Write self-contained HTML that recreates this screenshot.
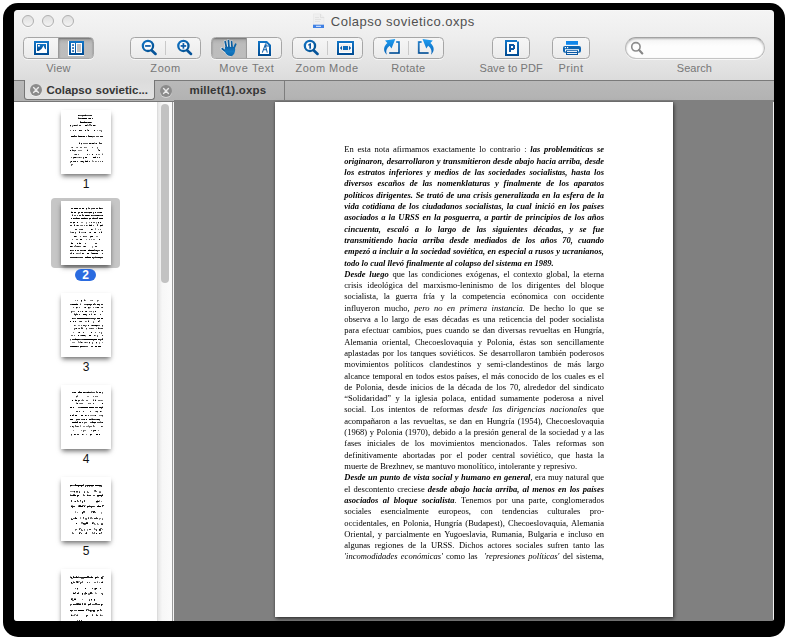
<!DOCTYPE html>
<html><head><meta charset="utf-8">
<style>
html,body{margin:0;padding:0;background:#fff;}
body{width:788px;height:641px;position:relative;overflow:hidden;font-family:"Liberation Sans",sans-serif;}
#frame{position:absolute;left:3px;top:3px;width:782px;height:634px;background:#000;border-radius:15px;}
#win{position:absolute;left:14px;top:10px;width:760px;height:611px;overflow:hidden;border-radius:4px 4px 3px 3px;background:#808080;}
#abs{position:absolute;left:-14px;top:-10px;width:788px;height:641px;}
#abs div,#abs svg{position:absolute;}
#tb{left:14px;top:10px;width:760px;height:70px;background:linear-gradient(#f9f9f9 0px,#f4f4f4 1.5px,#eeeeee 26px,#e5e5e5 50px,#dcdcdc 70px);}
.tl{width:10px;height:10px;border-radius:50%;border:1px solid #b0b0b0;background:linear-gradient(#dedede,#f3f3f3);top:15px;box-shadow:0 1px 0 rgba(255,255,255,.6);}
#title{left:330.8px;top:13px;height:18px;line-height:18px;font-size:13px;letter-spacing:.5px;color:#505050;white-space:nowrap;}
.seg{top:37px;height:20px;border:1px solid #a6a6a6;border-radius:4.5px;background:linear-gradient(#f6f6f6,#ebebeb);box-shadow:0 1px 0 rgba(255,255,255,.7);overflow:hidden;}
.seg .dv{top:3px;width:1px;height:14px;background:#c9c9c9;}
.seg .on{top:0;height:20px;background:linear-gradient(#a9a9a9,#bcbcbc 30%,#bdbdbd);box-shadow:inset 0 1px 2px rgba(0,0,0,.35);}
.lbl{top:61px;height:14px;line-height:14px;font-size:11px;color:#777;white-space:nowrap;text-align:center;transform:translateX(-50%);}
#tabs{left:14px;top:80px;width:760px;height:22px;background:linear-gradient(#b9b9b9,#b2b2b2);border-top:1px solid #7a7a7a;border-bottom:1px solid #777;box-sizing:border-box;}
.tabt{top:83px;height:14px;line-height:14px;font-size:11.5px;font-weight:bold;color:#363636;white-space:nowrap;}
.cls{width:12px;height:12px;border-radius:50%;background:#8b8b8b;box-shadow:0 1px 0 rgba(255,255,255,.45);}
#side{left:14px;top:102px;width:143px;height:519px;background:#fff;}
#sbar{left:157px;top:102px;width:15px;height:519px;background:linear-gradient(90deg,#e6e6e6,#f7f7f7 30%,#fbfbfb);border-left:1px solid #dcdcdc;box-sizing:border-box;}
#sthumb{left:161px;top:104px;width:8px;height:179px;border-radius:4px;background:#c2c2c2;}
#sdiv{left:172px;top:102px;width:2px;height:519px;background:linear-gradient(90deg,#9a9a9a 50%,#f4f4f4 50%);}
#main{left:174px;top:100px;width:600px;height:521px;background:#808080;}
#page{left:275px;top:102px;width:398px;height:515px;background:#fff;box-shadow:1px 2px 4px rgba(0,0,0,.55),0 0 2px rgba(0,0,0,.3);}
.ln{left:344.3px;width:259.7px;height:20px;line-height:20px;font-family:"Liberation Serif",serif;font-size:8.5px;color:#000;white-space:nowrap;}
.thumb{left:61px;width:50px;height:64px;background:#fff;box-shadow:0 3px 5px -1px rgba(0,0,0,.6);}
.tsvg{left:0;top:0;}
.tsel{left:51px;width:69px;height:70px;border-radius:4px;background:#c6c6c6;}
.tnum{left:61px;width:50px;height:14px;line-height:14px;text-align:center;font-size:12px;color:#111;}
.tbadge{left:75px;width:21px;height:12px;line-height:12px;border-radius:6px;background:#2a6be0;color:#fff;font-size:12px;font-weight:bold;text-align:center;}
</style></head>
<body>
<div id="frame"></div>
<div id="win"><div id="abs">
<div id="tb"></div>
<div class="tl" style="left:22px"></div><div class="tl" style="left:42px"></div><div class="tl" style="left:62px"></div>
<!--TITLEICON-->
<div id="title">Colapso sovietico.oxps</div>

<div class="seg" style="left:23px;width:69px"><div class="on" style="left:35px;width:34px"></div><div class="dv" style="left:34px;background:#9a9a9a;top:0;height:20px"></div></div>
<div class="seg" style="left:130px;width:69px"><div class="dv" style="left:34px"></div></div>
<div class="seg" style="left:211px;width:69px"><div class="on" style="left:0;width:34.5px"></div><div class="dv" style="left:34px;background:#9a9a9a;top:0;height:20px"></div></div>
<div class="seg" style="left:292px;width:69px"><div class="dv" style="left:34px"></div></div>
<div class="seg" style="left:373px;width:69px"><div class="dv" style="left:34px"></div></div>
<div class="seg" style="left:492px;width:36px"></div>
<div class="seg" style="left:552px;width:36px"></div>
<div class="seg" id="search" style="left:625px;width:138px;border-radius:11px;background:linear-gradient(#f3f3f3,#fdfdfd 40%,#fdfdfd);box-shadow:inset 0 1px 2px rgba(0,0,0,.25),0 1px 0 rgba(255,255,255,.7);border-color:#a2a2a2 #bababa #c4c4c4 #bababa"></div>
<div class="lbl" style="left:58.5px;letter-spacing:.2px">View</div>
<div class="lbl" style="left:165.6px;letter-spacing:.6px">Zoom</div>
<div class="lbl" style="left:246.8px;letter-spacing:.6px">Move Text</div>
<div class="lbl" style="left:327px;letter-spacing:.48px">Zoom Mode</div>
<div class="lbl" style="left:408.4px;letter-spacing:.3px">Rotate</div>
<div class="lbl" style="left:511.1px;letter-spacing:.08px">Save to PDF</div>
<div class="lbl" style="left:571px;letter-spacing:.45px">Print</div>
<div class="lbl" style="left:694.4px;letter-spacing:.08px">Search</div>

<div id="tabs"></div>
<div id="tab1" style="left:24px;top:80px;width:129px;height:19px;background:linear-gradient(#dcdcdc,#e2e2e2);border:1px solid #757575;border-top:none;border-radius:0 0 3.5px 3.5px"></div>
<div style="left:284px;top:81px;width:1px;height:20px;background:#7d7d7d"></div>
<div class="cls" style="left:30px;top:84px"></div>
<div class="cls" style="left:160px;top:85px"></div>
<div class="tabt" style="left:46.4px;letter-spacing:0;word-spacing:.6px">Colapso sovietic...</div>
<div class="tabt" style="left:189.5px;letter-spacing:.2px">millet(1).oxps</div>

<svg id="icons" width="788" height="100" viewBox="0 0 788 100" style="left:0;top:0">
<defs>
<linearGradient id="gb" x1="0" y1="0" x2="0" y2="1"><stop offset="0" stop-color="#1276c8"/><stop offset="1" stop-color="#004a90"/></linearGradient>
<linearGradient id="gm" x1="0" y1="0" x2="1" y2="1"><stop offset="0" stop-color="#1273c4"/><stop offset="1" stop-color="#03508f"/></linearGradient>
<linearGradient id="ga" x1="0" y1="0" x2="0" y2="1"><stop offset="0" stop-color="#1c9cf2"/><stop offset="1" stop-color="#0b62b4"/></linearGradient>
<linearGradient id="gh" x1="0" y1="0" x2="0" y2="1"><stop offset="0" stop-color="#0c62a8"/><stop offset=".5" stop-color="#1479c2"/><stop offset="1" stop-color="#0b67ad"/></linearGradient>
</defs>
<!-- title doc icon -->
<path d="M313.5,14 h7 l3.5,3.5 v7.5 h-10.5z" fill="#efefef" stroke="#e6e6e6" stroke-width=".6"/>
<path d="M320.5,14 v3.5 h3.5" fill="none" stroke="#dadada" stroke-width=".7"/>
<path d="M315,17.5h4M315,19.5h6M315,21.5h5" stroke="#e2e2e2" stroke-width="1"/>
<rect x="313" y="24.7" width="11" height="3.3" fill="#3f80e4"/><rect x="316" y="25.8" width="5" height="1" fill="#e8f0ff"/>
<!-- view 1 -->
<rect x="33.5" y="40.5" width="16" height="15" fill="#fbfbfb" opacity=".8"/>
<rect x="34" y="41" width="15" height="14" fill="url(#gb)"/>
<rect x="36" y="43" width="11" height="10" fill="#fff"/>
<rect x="37" y="44" width="9" height="7" fill="url(#gb)"/>
<path d="M38.6,51 L41.5,49 L43.6,45.4 L44.6,48.2 L46,49.6 V51Z" fill="#fff"/>
<rect x="38" y="45" width="1.8" height="1.6" fill="#fff"/>
<!-- view 2 -->
<rect x="68" y="41" width="16" height="15" fill="#fff"/>
<rect x="69" y="41" width="15" height="14" fill="url(#gb)"/>
<rect x="71" y="43" width="4" height="10" fill="#fff"/>
<rect x="72.2" y="44.2" width="1.7" height="1.7" fill="#0a58a6"/><rect x="72.2" y="47.2" width="1.7" height="1.7" fill="#0a58a6"/><rect x="72.2" y="50.2" width="1.7" height="1.7" fill="#0a58a6"/>
<rect x="76.5" y="43.5" width="5" height="9" fill="#c2c2c2" stroke="#fff" stroke-width="1"/>
<!-- zoom out / in -->
<g transform="translate(147.95,45.9)"><circle cx="0" cy="0" r="5.1" fill="#fdfdfd" stroke="url(#gm)" stroke-width="2.3"/><path d="M3.9,4.6 L7.6,8" stroke="#06549a" stroke-width="2.7" stroke-linecap="round" fill="none"/></g><rect x="145.1" y="45.1" width="5.6" height="1.7" fill="#0a5aa6"/>
<g transform="translate(183.4,45.9)"><circle cx="0" cy="0" r="5.1" fill="#fdfdfd" stroke="url(#gm)" stroke-width="2.3"/><path d="M3.9,4.6 L7.6,8" stroke="#06549a" stroke-width="2.7" stroke-linecap="round" fill="none"/></g><rect x="180.6" y="45.1" width="5.6" height="1.7" fill="#0a5aa6"/><rect x="182.55" y="43.1" width="1.7" height="5.6" fill="#0a5aa6"/>
<!-- hand -->
<g stroke="#f4f4f4" stroke-width="2.7" stroke-linecap="round" fill="none" opacity=".8">
<path d="M225,41.6 L226.4,47.6M228.2,40.5 L228.8,47M231.4,41.6 L231.9,47.5M221.8,48.6 L225.4,51.4"/></g>
<path d="M224.4,47 L233,47 L231,56.4 L228,56.2 C226,54.8 224.8,53 224,51Z" fill="#f4f4f4" opacity=".8"/>
<g stroke-width="1.75" stroke-linecap="round" fill="none">
<path d="M225.2,41.7 L226.5,47.8" stroke="#0a5c9e"/><path d="M228.4,40.7 L229,47.2" stroke="#0a5c9e"/><path d="M231.6,41.7 L232.1,47.6" stroke="#0a5c9e"/><path d="M235.7,44.2 L234,48.2" stroke="#0c64a8"/><path d="M222.2,48.7 L225.8,51.5" stroke="#0a5a9a"/></g>
<path d="M225,46.8 L234.9,47 C235.6,50 235,53 233,55.2 C231.5,56.3 229.5,56.3 228,55.6 C226.2,54.4 225.2,52.8 224.7,50.6Z" fill="url(#gh)"/>
<!-- text select -->
<path d="M257.5,40.5 H267.2 L271.5,44.8 V56.5 H257.5Z" fill="#fbfbfb" opacity=".7"/>
<path d="M258,41 H267 L271,45 V56 H258Z" fill="url(#gb)"/>
<path d="M260,43 H266.3 L269,45.7 V54 H260Z" fill="#fff"/>
<path d="M266,43.2 V46 H269" stroke="#0c5aa6" stroke-width="1" fill="none"/>
<path d="M262.3,52.6 L265.2,45 L267.3,52.6 M263.4,49.8 H266.6" stroke="#1463ad" stroke-width="1.05" fill="none"/>
<!-- zoom mode 1 -->
<g transform="translate(309.95,45.9)"><circle cx="0" cy="0" r="5.1" fill="#fdfdfd" stroke="url(#gm)" stroke-width="2.3"/><path d="M3.9,4.6 L7.6,8" stroke="#06549a" stroke-width="2.7" stroke-linecap="round" fill="none"/></g>
<path d="M308.2,44.6 L310,43.3 H311 V48.7 H309.3 V45.2 L308.2,45.8Z" fill="#0a58a4"/>
<!-- fit width -->
<rect x="336.5" y="40.5" width="18" height="15" fill="#fbfbfb" opacity=".8"/>
<rect x="337" y="41" width="17" height="14" fill="url(#gb)"/>
<rect x="339" y="43" width="13" height="10" fill="#fff"/>
<rect x="340" y="44" width="11" height="8" fill="#f0f0f0"/>
<rect x="343" y="46" width="5" height="4" fill="#0e6cbc"/>
<path d="M339.9,48 L342,45.8 V50.2Z M351.1,48 L349,45.8 V50.2Z" fill="#0b5ba8"/>
<!-- rotate left -->
<path d="M396,41 H400 V54 H389 V52 H398 V43 H396Z" fill="url(#gb)" stroke="#fbfbfb" stroke-width=".5" stroke-opacity=".7"/>
<path d="M395.3,39.1 L385,40.6 L387.4,43.1 C383.6,46.2 382.6,51.2 386.9,54.8 C385.4,51.2 386.4,48.3 389.6,45.7 L391.5,48.4Z" fill="url(#ga)"/>
<!-- rotate right (mirror about 408.9) -->
<g transform="translate(817.8,0) scale(-1,1)">
<path d="M396,41 H400 V54 H389 V52 H398 V43 H396Z" fill="url(#gb)" stroke="#fbfbfb" stroke-width=".5" stroke-opacity=".7"/>
<path d="M395.3,39.1 L385,40.6 L387.4,43.1 C383.6,46.2 382.6,51.2 386.9,54.8 C385.4,51.2 386.4,48.3 389.6,45.7 L391.5,48.4Z" fill="url(#ga)"/>
</g>
<!-- save pdf -->
<path d="M504.5,39.5 H517.5 V41 H519.5 V56.5 H504.5Z" fill="#fbfbfb" opacity=".7"/>
<path d="M505,40 H517 V41.5 H519 V56 H505Z" fill="url(#gb)"/>
<rect x="507" y="42" width="10" height="12" fill="#fff"/>
<path d="M509,44 H514 V45 H515 V49 H514 V50 H511 V52 H509Z M511,46 V48 H513 V46Z" fill="#0b57a3" fill-rule="evenodd"/>
<!-- print -->
<rect x="565.5" y="40.6" width="13" height="15" fill="#fbfbfb" opacity=".6"/>
<rect x="566" y="41" width="12" height="3.8" fill="#0f86ea"/>
<rect x="563" y="46" width="18" height="6.8" rx="2" fill="#0c64b2"/>
<rect x="564.8" y="47" width="1.2" height="1.2" fill="#fff"/><rect x="567" y="47" width="1.2" height="1.2" fill="#fff"/>
<path d="M565,51.6 V49.3 H579 V51.6 H578 V50.6 H566 V51.6Z" fill="#fff"/>
<rect x="566" y="50.4" width="12" height="4.6" fill="#0a58a3"/>
<rect x="567" y="51.1" width="10" height=".9" fill="#fff"/><rect x="567" y="53.1" width="10" height=".9" fill="#fff"/>
<!-- search icon -->
<circle cx="635.9" cy="46.85" r="4.2" fill="none" stroke="#8c8c8c" stroke-width="1.6"/>
<path d="M639.1,50.1 L642.3,53.4" stroke="#878787" stroke-width="2.2" stroke-linecap="round"/>
<!-- tab close x -->
<g stroke="#e9e9e9" stroke-width="1.4" stroke-linecap="round"><path d="M33.6,87.6 l4.8,4.8 m0,-4.8 l-4.8,4.8"/><path d="M163.6,88.6 l4.8,4.8 m0,-4.8 l-4.8,4.8"/></g>
</svg>

<div id="side"></div>
<div id="sbar"></div><div id="sthumb"></div><div id="sdiv"></div>
<div id="main"></div><div style="left:773px;top:102px;width:1px;height:519px;background:#f2f2f2"></div>
<div class="thumb" style="top:109.8px"><svg class="tsvg" shape-rendering="crispEdges" width="50" height="64" viewBox="0 0 50 64"><rect x="17" y="5" width="1" height="1" fill="#000" opacity="1"/><rect x="18" y="5" width="3" height="1" fill="#000" opacity="0.7"/><rect x="21" y="5" width="3" height="1" fill="#000" opacity="0.85"/><rect x="21" y="6" width="1" height="1" fill="#000" opacity="0.4"/><rect x="24" y="5" width="1" height="1" fill="#000" opacity="1"/><rect x="24" y="4" width="1" height="1" fill="#000" opacity="0.25"/><rect x="25" y="5" width="3" height="1" fill="#000" opacity="0.7"/><rect x="28" y="5" width="1" height="1" fill="#000" opacity="0.7"/><rect x="29" y="5" width="2" height="1" fill="#000" opacity="0.85"/><rect x="17" y="8" width="3" height="1" fill="#000" opacity="0.85"/><rect x="17" y="7" width="1" height="1" fill="#000" opacity="0.4"/><rect x="20" y="8" width="1" height="1" fill="#000" opacity="0.7"/><rect x="21" y="8" width="3" height="1" fill="#000" opacity="1"/><rect x="24" y="8" width="2" height="1" fill="#000" opacity="1"/><rect x="27" y="8" width="1" height="1" fill="#000" opacity="0.7"/><rect x="28" y="8" width="2" height="1" fill="#000" opacity="1"/><rect x="31" y="8" width="1" height="1" fill="#000" opacity="0.85"/><rect x="19" y="12" width="2" height="1" fill="#000" opacity="1"/><rect x="19" y="11" width="1" height="1" fill="#000" opacity="0.6"/><rect x="21" y="12" width="2" height="1" fill="#000" opacity="1"/><rect x="23" y="12" width="3" height="1" fill="#000" opacity="1"/><rect x="23" y="11" width="1" height="1" fill="#000" opacity="0.4"/><rect x="26" y="12" width="1" height="1" fill="#000" opacity="0.7"/><rect x="27" y="12" width="3" height="1" fill="#000" opacity="1"/><rect x="30" y="12" width="1" height="1" fill="#000" opacity="0.7"/><rect x="9" y="15" width="1" height="1" fill="#000" opacity="1"/><rect x="9" y="16" width="1" height="1" fill="#000" opacity="0.25"/><rect x="11" y="15" width="2" height="1" fill="#000" opacity="0.45"/><rect x="11" y="16" width="1" height="1" fill="#000" opacity="0.6"/><rect x="13" y="15" width="1" height="1" fill="#000" opacity="1"/><rect x="14" y="15" width="2" height="1" fill="#000" opacity="0.8"/><rect x="16" y="15" width="1" height="1" fill="#000" opacity="0.6"/><rect x="16" y="14" width="1" height="1" fill="#000" opacity="0.25"/><rect x="18" y="15" width="1" height="1" fill="#000" opacity="0.8"/><rect x="19" y="15" width="1" height="1" fill="#000" opacity="0.8"/><rect x="24" y="15" width="2" height="1" fill="#000" opacity="1"/><rect x="26" y="15" width="2" height="1" fill="#000" opacity="0.45"/><rect x="26" y="14" width="1" height="1" fill="#000" opacity="0.4"/><rect x="28" y="15" width="1" height="1" fill="#000" opacity="0.45"/><rect x="28" y="14" width="1" height="1" fill="#000" opacity="0.6"/><rect x="29" y="15" width="1" height="1" fill="#000" opacity="0.45"/><rect x="29" y="14" width="1" height="1" fill="#000" opacity="0.6"/><rect x="30" y="15" width="1" height="1" fill="#000" opacity="0.8"/><rect x="32" y="15" width="2" height="1" fill="#000" opacity="1"/><rect x="34" y="15" width="1" height="1" fill="#000" opacity="0.45"/><rect x="9" y="20" width="1" height="1" fill="#000" opacity="0.6"/><rect x="12" y="20" width="1" height="1" fill="#000" opacity="0.8"/><rect x="14" y="20" width="1" height="1" fill="#000" opacity="0.8"/><rect x="18" y="20" width="1" height="1" fill="#000" opacity="1"/><rect x="19" y="20" width="2" height="1" fill="#000" opacity="0.8"/><rect x="24" y="20" width="1" height="1" fill="#000" opacity="1"/><rect x="26" y="20" width="1" height="1" fill="#000" opacity="0.45"/><rect x="26" y="19" width="1" height="1" fill="#000" opacity="0.4"/><rect x="27" y="20" width="1" height="1" fill="#000" opacity="1"/><rect x="33" y="20" width="1" height="1" fill="#000" opacity="1"/><rect x="36" y="20" width="1" height="1" fill="#000" opacity="0.45"/><rect x="38" y="20" width="2" height="1" fill="#000" opacity="0.45"/><rect x="40" y="20" width="1" height="1" fill="#000" opacity="0.45"/><rect x="40" y="21" width="1" height="1" fill="#000" opacity="0.6"/><rect x="10" y="26" width="3" height="1" fill="#000" opacity="1"/><rect x="13" y="26" width="3" height="1" fill="#000" opacity="0.85"/><rect x="13" y="25" width="1" height="1" fill="#000" opacity="0.6"/><rect x="17" y="26" width="1" height="1" fill="#000" opacity="0.85"/><rect x="17" y="25" width="1" height="1" fill="#000" opacity="0.4"/><rect x="18" y="26" width="3" height="1" fill="#000" opacity="1"/><rect x="21" y="26" width="1" height="1" fill="#000" opacity="0.7"/><rect x="22" y="26" width="2" height="1" fill="#000" opacity="1"/><rect x="25" y="26" width="1" height="1" fill="#000" opacity="0.7"/><rect x="27" y="26" width="1" height="1" fill="#000" opacity="0.85"/><rect x="27" y="25" width="1" height="1" fill="#000" opacity="0.6"/><rect x="28" y="26" width="3" height="1" fill="#000" opacity="1"/><rect x="31" y="26" width="3" height="1" fill="#000" opacity="0.7"/><rect x="31" y="27" width="1" height="1" fill="#000" opacity="0.25"/><rect x="35" y="26" width="3" height="1" fill="#000" opacity="0.7"/><rect x="39" y="26" width="3" height="1" fill="#000" opacity="0.85"/><rect x="18" y="33" width="1" height="1" fill="#000" opacity="1"/><rect x="18" y="32" width="1" height="1" fill="#000" opacity="0.4"/><rect x="20" y="33" width="1" height="1" fill="#000" opacity="1"/><rect x="20" y="34" width="1" height="1" fill="#000" opacity="0.25"/><rect x="22" y="33" width="1" height="1" fill="#000" opacity="0.6"/><rect x="23" y="33" width="2" height="1" fill="#000" opacity="0.6"/><rect x="25" y="33" width="2" height="1" fill="#000" opacity="0.6"/><rect x="28" y="33" width="2" height="1" fill="#000" opacity="1"/><rect x="30" y="33" width="1" height="1" fill="#000" opacity="0.45"/><rect x="31" y="33" width="2" height="1" fill="#000" opacity="1"/><rect x="33" y="33" width="1" height="1" fill="#000" opacity="0.45"/><rect x="33" y="32" width="1" height="1" fill="#000" opacity="0.25"/><rect x="34" y="33" width="1" height="1" fill="#000" opacity="0.45"/><rect x="35" y="33" width="1" height="1" fill="#000" opacity="1"/><rect x="38" y="33" width="2" height="1" fill="#000" opacity="0.8"/><rect x="38" y="32" width="1" height="1" fill="#000" opacity="0.6"/><rect x="40" y="33" width="1" height="1" fill="#000" opacity="0.8"/><rect x="10" y="37" width="1" height="1" fill="#000" opacity="0.45"/><rect x="11" y="37" width="1" height="1" fill="#000" opacity="0.8"/><rect x="15" y="37" width="1" height="1" fill="#000" opacity="0.45"/><rect x="16" y="37" width="1" height="1" fill="#000" opacity="0.6"/><rect x="19" y="37" width="2" height="1" fill="#000" opacity="0.6"/><rect x="23" y="37" width="1" height="1" fill="#000" opacity="0.6"/><rect x="24" y="37" width="2" height="1" fill="#000" opacity="0.45"/><rect x="31" y="37" width="1" height="1" fill="#000" opacity="0.6"/><rect x="36" y="37" width="1" height="1" fill="#000" opacity="0.6"/><rect x="36" y="38" width="1" height="1" fill="#000" opacity="0.4"/><rect x="9" y="40" width="1" height="1" fill="#000" opacity="1"/><rect x="11" y="40" width="1" height="1" fill="#000" opacity="0.8"/><rect x="11" y="39" width="1" height="1" fill="#000" opacity="0.25"/><rect x="12" y="40" width="1" height="1" fill="#000" opacity="0.8"/><rect x="13" y="40" width="1" height="1" fill="#000" opacity="0.6"/><rect x="13" y="41" width="1" height="1" fill="#000" opacity="0.25"/><rect x="14" y="40" width="1" height="1" fill="#000" opacity="0.8"/><rect x="17" y="40" width="1" height="1" fill="#000" opacity="0.45"/><rect x="18" y="40" width="2" height="1" fill="#000" opacity="0.45"/><rect x="20" y="40" width="1" height="1" fill="#000" opacity="0.45"/><rect x="26" y="40" width="1" height="1" fill="#000" opacity="1"/><rect x="26" y="39" width="1" height="1" fill="#000" opacity="0.25"/><rect x="37" y="40" width="1" height="1" fill="#000" opacity="0.45"/><rect x="37" y="39" width="1" height="1" fill="#000" opacity="0.6"/><rect x="38" y="40" width="1" height="1" fill="#000" opacity="1"/><rect x="13" y="44" width="1" height="1" fill="#000" opacity="0.45"/><rect x="14" y="44" width="2" height="1" fill="#000" opacity="0.8"/><rect x="17" y="44" width="1" height="1" fill="#000" opacity="0.6"/><rect x="26" y="44" width="1" height="1" fill="#000" opacity="0.8"/><rect x="28" y="44" width="1" height="1" fill="#000" opacity="0.45"/><rect x="31" y="44" width="1" height="1" fill="#000" opacity="1"/><rect x="35" y="44" width="1" height="1" fill="#000" opacity="0.8"/><rect x="37" y="44" width="2" height="1" fill="#000" opacity="0.45"/><rect x="41" y="44" width="1" height="1" fill="#000" opacity="0.6"/><rect x="41" y="43" width="1" height="1" fill="#000" opacity="0.25"/><rect x="10" y="47" width="1" height="1" fill="#000" opacity="0.6"/><rect x="12" y="47" width="1" height="1" fill="#000" opacity="0.8"/><rect x="12" y="48" width="1" height="1" fill="#000" opacity="0.4"/><rect x="13" y="47" width="1" height="1" fill="#000" opacity="1"/><rect x="14" y="47" width="1" height="1" fill="#000" opacity="1"/><rect x="15" y="47" width="1" height="1" fill="#000" opacity="0.45"/><rect x="16" y="47" width="2" height="1" fill="#000" opacity="0.45"/><rect x="18" y="47" width="1" height="1" fill="#000" opacity="0.8"/><rect x="19" y="47" width="2" height="1" fill="#000" opacity="0.45"/><rect x="22" y="47" width="1" height="1" fill="#000" opacity="0.8"/><rect x="22" y="48" width="1" height="1" fill="#000" opacity="0.6"/><rect x="24" y="47" width="1" height="1" fill="#000" opacity="1"/><rect x="25" y="47" width="1" height="1" fill="#000" opacity="1"/><rect x="32" y="47" width="2" height="1" fill="#000" opacity="1"/><rect x="34" y="47" width="1" height="1" fill="#000" opacity="1"/><rect x="34" y="46" width="1" height="1" fill="#000" opacity="0.25"/><rect x="36" y="47" width="1" height="1" fill="#000" opacity="0.8"/><rect x="38" y="47" width="1" height="1" fill="#000" opacity="0.8"/><rect x="9" y="51" width="1" height="1" fill="#000" opacity="0.45"/><rect x="9" y="52" width="1" height="1" fill="#000" opacity="0.6"/><rect x="10" y="51" width="1" height="1" fill="#000" opacity="1"/><rect x="12" y="51" width="1" height="1" fill="#000" opacity="0.8"/><rect x="13" y="51" width="1" height="1" fill="#000" opacity="0.8"/><rect x="14" y="51" width="1" height="1" fill="#000" opacity="1"/><rect x="16" y="51" width="1" height="1" fill="#000" opacity="0.8"/><rect x="19" y="51" width="1" height="1" fill="#000" opacity="0.45"/><rect x="20" y="51" width="2" height="1" fill="#000" opacity="1"/><rect x="22" y="51" width="1" height="1" fill="#000" opacity="0.6"/><rect x="22" y="52" width="1" height="1" fill="#000" opacity="0.6"/><rect x="24" y="51" width="2" height="1" fill="#000" opacity="1"/><rect x="24" y="50" width="1" height="1" fill="#000" opacity="0.25"/><rect x="26" y="51" width="1" height="1" fill="#000" opacity="1"/><rect x="26" y="50" width="1" height="1" fill="#000" opacity="0.25"/><rect x="28" y="51" width="1" height="1" fill="#000" opacity="0.8"/><rect x="31" y="51" width="1" height="1" fill="#000" opacity="0.45"/><rect x="31" y="50" width="1" height="1" fill="#000" opacity="0.4"/><rect x="32" y="51" width="1" height="1" fill="#000" opacity="0.45"/><rect x="34" y="51" width="1" height="1" fill="#000" opacity="0.6"/><rect x="35" y="51" width="1" height="1" fill="#000" opacity="0.45"/><rect x="37" y="51" width="1" height="1" fill="#000" opacity="0.6"/><rect x="39" y="51" width="1" height="1" fill="#000" opacity="0.6"/><rect x="41" y="51" width="1" height="1" fill="#000" opacity="0.8"/><rect x="10" y="54" width="2" height="1" fill="#000" opacity="0.6"/><rect x="10" y="55" width="1" height="1" fill="#000" opacity="0.6"/></svg></div><div class="tnum" style="top:176.8px">1</div><div class="tsel" style="top:198px"></div><div class="thumb" style="top:201px"><svg class="tsvg" shape-rendering="crispEdges" width="50" height="64" viewBox="0 0 50 64"><rect x="10" y="7" width="2" height="1" fill="#000" opacity="0.85"/><rect x="13" y="7" width="1" height="1" fill="#000" opacity="1"/><rect x="14" y="7" width="3" height="1" fill="#000" opacity="1"/><rect x="18" y="7" width="1" height="1" fill="#000" opacity="0.85"/><rect x="19" y="7" width="1" height="1" fill="#000" opacity="0.85"/><rect x="21" y="7" width="2" height="1" fill="#000" opacity="1"/><rect x="25" y="7" width="1" height="1" fill="#000" opacity="1"/><rect x="25" y="8" width="1" height="1" fill="#000" opacity="0.4"/><rect x="27" y="7" width="1" height="1" fill="#000" opacity="0.7"/><rect x="27" y="6" width="1" height="1" fill="#000" opacity="0.4"/><rect x="28" y="7" width="1" height="1" fill="#000" opacity="0.85"/><rect x="30" y="7" width="2" height="1" fill="#000" opacity="0.7"/><rect x="30" y="8" width="1" height="1" fill="#000" opacity="0.25"/><rect x="32" y="7" width="2" height="1" fill="#000" opacity="0.85"/><rect x="35" y="7" width="2" height="1" fill="#000" opacity="0.85"/><rect x="38" y="7" width="1" height="1" fill="#000" opacity="1"/><rect x="38" y="6" width="1" height="1" fill="#000" opacity="0.4"/><rect x="39" y="7" width="1" height="1" fill="#000" opacity="1"/><rect x="40" y="7" width="2" height="1" fill="#000" opacity="0.7"/><rect x="10" y="11" width="2" height="1" fill="#000" opacity="1"/><rect x="10" y="10" width="1" height="1" fill="#000" opacity="0.25"/><rect x="13" y="11" width="2" height="1" fill="#000" opacity="1"/><rect x="17" y="11" width="2" height="1" fill="#000" opacity="0.85"/><rect x="17" y="12" width="1" height="1" fill="#000" opacity="0.6"/><rect x="20" y="11" width="2" height="1" fill="#000" opacity="1"/><rect x="23" y="11" width="3" height="1" fill="#000" opacity="0.85"/><rect x="26" y="11" width="2" height="1" fill="#000" opacity="0.7"/><rect x="28" y="11" width="3" height="1" fill="#000" opacity="1"/><rect x="28" y="12" width="1" height="1" fill="#000" opacity="0.25"/><rect x="32" y="11" width="1" height="1" fill="#000" opacity="0.85"/><rect x="32" y="12" width="1" height="1" fill="#000" opacity="0.6"/><rect x="34" y="11" width="1" height="1" fill="#000" opacity="1"/><rect x="36" y="11" width="3" height="1" fill="#000" opacity="0.7"/><rect x="39" y="11" width="2" height="1" fill="#000" opacity="1"/><rect x="11" y="14" width="1" height="1" fill="#000" opacity="0.85"/><rect x="11" y="13" width="1" height="1" fill="#000" opacity="0.4"/><rect x="13" y="14" width="2" height="1" fill="#000" opacity="0.7"/><rect x="16" y="14" width="1" height="1" fill="#000" opacity="0.7"/><rect x="18" y="14" width="2" height="1" fill="#000" opacity="0.85"/><rect x="21" y="14" width="2" height="1" fill="#000" opacity="0.85"/><rect x="21" y="13" width="1" height="1" fill="#000" opacity="0.6"/><rect x="24" y="14" width="1" height="1" fill="#000" opacity="1"/><rect x="25" y="14" width="3" height="1" fill="#000" opacity="1"/><rect x="28" y="14" width="1" height="1" fill="#000" opacity="0.7"/><rect x="30" y="14" width="1" height="1" fill="#000" opacity="1"/><rect x="31" y="14" width="2" height="1" fill="#000" opacity="0.7"/><rect x="33" y="14" width="1" height="1" fill="#000" opacity="0.7"/><rect x="34" y="14" width="2" height="1" fill="#000" opacity="0.85"/><rect x="36" y="14" width="1" height="1" fill="#000" opacity="1"/><rect x="37" y="14" width="1" height="1" fill="#000" opacity="1"/><rect x="38" y="14" width="3" height="1" fill="#000" opacity="0.7"/><rect x="41" y="14" width="1" height="1" fill="#000" opacity="1"/><rect x="10" y="17" width="1" height="1" fill="#000" opacity="1"/><rect x="12" y="17" width="1" height="1" fill="#000" opacity="1"/><rect x="13" y="17" width="2" height="1" fill="#000" opacity="0.85"/><rect x="15" y="17" width="1" height="1" fill="#000" opacity="1"/><rect x="15" y="16" width="1" height="1" fill="#000" opacity="0.4"/><rect x="16" y="17" width="2" height="1" fill="#000" opacity="1"/><rect x="18" y="17" width="1" height="1" fill="#000" opacity="0.85"/><rect x="20" y="17" width="3" height="1" fill="#000" opacity="1"/><rect x="23" y="17" width="2" height="1" fill="#000" opacity="1"/><rect x="23" y="16" width="1" height="1" fill="#000" opacity="0.25"/><rect x="25" y="17" width="2" height="1" fill="#000" opacity="0.85"/><rect x="28" y="17" width="2" height="1" fill="#000" opacity="1"/><rect x="28" y="18" width="1" height="1" fill="#000" opacity="0.25"/><rect x="31" y="17" width="1" height="1" fill="#000" opacity="0.85"/><rect x="32" y="17" width="1" height="1" fill="#000" opacity="1"/><rect x="32" y="16" width="1" height="1" fill="#000" opacity="0.25"/><rect x="33" y="17" width="3" height="1" fill="#000" opacity="0.85"/><rect x="36" y="17" width="1" height="1" fill="#000" opacity="0.85"/><rect x="36" y="16" width="1" height="1" fill="#000" opacity="0.6"/><rect x="38" y="17" width="3" height="1" fill="#000" opacity="1"/><rect x="41" y="17" width="1" height="1" fill="#000" opacity="1"/><rect x="9" y="21" width="2" height="1" fill="#000" opacity="0.8"/><rect x="12" y="21" width="2" height="1" fill="#000" opacity="1"/><rect x="12" y="22" width="1" height="1" fill="#000" opacity="0.25"/><rect x="16" y="21" width="1" height="1" fill="#000" opacity="1"/><rect x="20" y="21" width="1" height="1" fill="#000" opacity="0.45"/><rect x="21" y="21" width="1" height="1" fill="#000" opacity="0.45"/><rect x="25" y="21" width="1" height="1" fill="#000" opacity="0.45"/><rect x="25" y="22" width="1" height="1" fill="#000" opacity="0.4"/><rect x="28" y="21" width="1" height="1" fill="#000" opacity="0.45"/><rect x="30" y="21" width="1" height="1" fill="#000" opacity="0.8"/><rect x="32" y="21" width="2" height="1" fill="#000" opacity="0.6"/><rect x="35" y="21" width="1" height="1" fill="#000" opacity="0.45"/><rect x="35" y="22" width="1" height="1" fill="#000" opacity="0.25"/><rect x="37" y="21" width="1" height="1" fill="#000" opacity="1"/><rect x="37" y="22" width="1" height="1" fill="#000" opacity="0.25"/><rect x="39" y="21" width="1" height="1" fill="#000" opacity="1"/><rect x="9" y="24" width="2" height="1" fill="#000" opacity="0.8"/><rect x="13" y="24" width="1" height="1" fill="#000" opacity="1"/><rect x="13" y="23" width="1" height="1" fill="#000" opacity="0.4"/><rect x="15" y="24" width="1" height="1" fill="#000" opacity="0.45"/><rect x="16" y="24" width="1" height="1" fill="#000" opacity="1"/><rect x="17" y="24" width="1" height="1" fill="#000" opacity="0.6"/><rect x="19" y="24" width="1" height="1" fill="#000" opacity="0.45"/><rect x="20" y="24" width="1" height="1" fill="#000" opacity="0.6"/><rect x="21" y="24" width="1" height="1" fill="#000" opacity="0.6"/><rect x="23" y="24" width="1" height="1" fill="#000" opacity="0.6"/><rect x="25" y="24" width="1" height="1" fill="#000" opacity="0.8"/><rect x="26" y="24" width="1" height="1" fill="#000" opacity="0.45"/><rect x="28" y="24" width="2" height="1" fill="#000" opacity="1"/><rect x="28" y="23" width="1" height="1" fill="#000" opacity="0.25"/><rect x="30" y="24" width="1" height="1" fill="#000" opacity="1"/><rect x="30" y="23" width="1" height="1" fill="#000" opacity="0.25"/><rect x="32" y="24" width="1" height="1" fill="#000" opacity="0.6"/><rect x="36" y="24" width="1" height="1" fill="#000" opacity="0.8"/><rect x="36" y="23" width="1" height="1" fill="#000" opacity="0.6"/><rect x="39" y="24" width="2" height="1" fill="#000" opacity="1"/><rect x="39" y="25" width="1" height="1" fill="#000" opacity="0.25"/><rect x="41" y="24" width="1" height="1" fill="#000" opacity="0.8"/><rect x="41" y="23" width="1" height="1" fill="#000" opacity="0.25"/><rect x="14" y="28" width="2" height="1" fill="#000" opacity="0.8"/><rect x="18" y="28" width="1" height="1" fill="#000" opacity="0.6"/><rect x="19" y="28" width="1" height="1" fill="#000" opacity="0.6"/><rect x="20" y="28" width="2" height="1" fill="#000" opacity="0.8"/><rect x="30" y="28" width="1" height="1" fill="#000" opacity="1"/><rect x="31" y="28" width="1" height="1" fill="#000" opacity="0.6"/><rect x="34" y="28" width="1" height="1" fill="#000" opacity="0.45"/><rect x="34" y="27" width="1" height="1" fill="#000" opacity="0.4"/><rect x="37" y="28" width="1" height="1" fill="#000" opacity="0.45"/><rect x="39" y="28" width="1" height="1" fill="#000" opacity="0.6"/><rect x="9" y="31" width="2" height="1" fill="#000" opacity="0.45"/><rect x="9" y="30" width="1" height="1" fill="#000" opacity="0.25"/><rect x="11" y="31" width="1" height="1" fill="#000" opacity="0.8"/><rect x="12" y="31" width="1" height="1" fill="#000" opacity="0.8"/><rect x="14" y="31" width="1" height="1" fill="#000" opacity="0.8"/><rect x="14" y="32" width="1" height="1" fill="#000" opacity="0.4"/><rect x="18" y="31" width="1" height="1" fill="#000" opacity="1"/><rect x="18" y="30" width="1" height="1" fill="#000" opacity="0.4"/><rect x="20" y="31" width="1" height="1" fill="#000" opacity="0.45"/><rect x="21" y="31" width="2" height="1" fill="#000" opacity="0.45"/><rect x="23" y="31" width="1" height="1" fill="#000" opacity="0.45"/><rect x="24" y="31" width="1" height="1" fill="#000" opacity="1"/><rect x="28" y="31" width="1" height="1" fill="#000" opacity="0.6"/><rect x="29" y="31" width="1" height="1" fill="#000" opacity="1"/><rect x="33" y="31" width="2" height="1" fill="#000" opacity="1"/><rect x="38" y="31" width="1" height="1" fill="#000" opacity="0.8"/><rect x="40" y="31" width="1" height="1" fill="#000" opacity="1"/><rect x="40" y="30" width="1" height="1" fill="#000" opacity="0.4"/><rect x="13" y="35" width="2" height="1" fill="#000" opacity="1"/><rect x="15" y="35" width="1" height="1" fill="#000" opacity="0.6"/><rect x="19" y="35" width="1" height="1" fill="#000" opacity="0.6"/><rect x="22" y="35" width="1" height="1" fill="#000" opacity="0.8"/><rect x="23" y="35" width="1" height="1" fill="#000" opacity="0.6"/><rect x="24" y="35" width="2" height="1" fill="#000" opacity="0.6"/><rect x="29" y="35" width="1" height="1" fill="#000" opacity="0.8"/><rect x="29" y="36" width="1" height="1" fill="#000" opacity="0.4"/><rect x="30" y="35" width="2" height="1" fill="#000" opacity="1"/><rect x="35" y="35" width="2" height="1" fill="#000" opacity="0.45"/><rect x="11" y="38" width="1" height="1" fill="#000" opacity="0.6"/><rect x="15" y="38" width="2" height="1" fill="#000" opacity="0.6"/><rect x="19" y="38" width="2" height="1" fill="#000" opacity="1"/><rect x="25" y="38" width="1" height="1" fill="#000" opacity="0.45"/><rect x="28" y="38" width="1" height="1" fill="#000" opacity="0.6"/><rect x="30" y="38" width="1" height="1" fill="#000" opacity="0.45"/><rect x="32" y="38" width="2" height="1" fill="#000" opacity="0.45"/><rect x="38" y="38" width="1" height="1" fill="#000" opacity="1"/><rect x="10" y="42" width="2" height="1" fill="#000" opacity="1"/><rect x="10" y="41" width="1" height="1" fill="#000" opacity="0.4"/><rect x="16" y="42" width="1" height="1" fill="#000" opacity="1"/><rect x="18" y="42" width="2" height="1" fill="#000" opacity="1"/><rect x="18" y="41" width="1" height="1" fill="#000" opacity="0.25"/><rect x="24" y="42" width="1" height="1" fill="#000" opacity="0.8"/><rect x="34" y="42" width="2" height="1" fill="#000" opacity="0.8"/><rect x="9" y="45" width="2" height="1" fill="#000" opacity="1"/><rect x="11" y="45" width="1" height="1" fill="#000" opacity="0.6"/><rect x="13" y="45" width="1" height="1" fill="#000" opacity="0.6"/><rect x="14" y="45" width="1" height="1" fill="#000" opacity="0.45"/><rect x="14" y="44" width="1" height="1" fill="#000" opacity="0.6"/><rect x="15" y="45" width="1" height="1" fill="#000" opacity="0.6"/><rect x="16" y="45" width="2" height="1" fill="#000" opacity="0.8"/><rect x="18" y="45" width="2" height="1" fill="#000" opacity="0.6"/><rect x="22" y="45" width="1" height="1" fill="#000" opacity="0.6"/><rect x="23" y="45" width="1" height="1" fill="#000" opacity="1"/><rect x="24" y="45" width="1" height="1" fill="#000" opacity="0.8"/><rect x="31" y="45" width="1" height="1" fill="#000" opacity="0.45"/><rect x="31" y="46" width="1" height="1" fill="#000" opacity="0.4"/><rect x="34" y="45" width="2" height="1" fill="#000" opacity="0.8"/><rect x="9" y="49" width="1" height="1" fill="#000" opacity="1"/><rect x="10" y="49" width="3" height="1" fill="#000" opacity="0.7"/><rect x="14" y="49" width="1" height="1" fill="#000" opacity="1"/><rect x="16" y="49" width="2" height="1" fill="#000" opacity="0.85"/><rect x="19" y="49" width="2" height="1" fill="#000" opacity="0.85"/><rect x="21" y="49" width="2" height="1" fill="#000" opacity="0.7"/><rect x="23" y="49" width="2" height="1" fill="#000" opacity="1"/><rect x="27" y="49" width="1" height="1" fill="#000" opacity="1"/><rect x="28" y="49" width="2" height="1" fill="#000" opacity="1"/><rect x="28" y="48" width="1" height="1" fill="#000" opacity="0.25"/><rect x="30" y="49" width="3" height="1" fill="#000" opacity="1"/><rect x="33" y="49" width="2" height="1" fill="#000" opacity="0.7"/><rect x="33" y="48" width="1" height="1" fill="#000" opacity="0.4"/><rect x="35" y="49" width="1" height="1" fill="#000" opacity="1"/><rect x="36" y="49" width="3" height="1" fill="#000" opacity="0.7"/><rect x="36" y="50" width="1" height="1" fill="#000" opacity="0.6"/><rect x="40" y="49" width="1" height="1" fill="#000" opacity="0.7"/><rect x="41" y="49" width="1" height="1" fill="#000" opacity="1"/><rect x="9" y="52" width="1" height="1" fill="#000" opacity="0.8"/><rect x="10" y="52" width="1" height="1" fill="#000" opacity="0.8"/><rect x="10" y="51" width="1" height="1" fill="#000" opacity="0.4"/><rect x="12" y="52" width="1" height="1" fill="#000" opacity="1"/><rect x="15" y="52" width="2" height="1" fill="#000" opacity="0.6"/><rect x="17" y="52" width="1" height="1" fill="#000" opacity="0.45"/><rect x="18" y="52" width="1" height="1" fill="#000" opacity="0.45"/><rect x="19" y="52" width="1" height="1" fill="#000" opacity="0.45"/><rect x="19" y="51" width="1" height="1" fill="#000" opacity="0.25"/><rect x="21" y="52" width="1" height="1" fill="#000" opacity="1"/><rect x="22" y="52" width="1" height="1" fill="#000" opacity="0.8"/><rect x="26" y="52" width="2" height="1" fill="#000" opacity="1"/><rect x="30" y="52" width="1" height="1" fill="#000" opacity="0.45"/><rect x="30" y="51" width="1" height="1" fill="#000" opacity="0.4"/><rect x="31" y="52" width="1" height="1" fill="#000" opacity="1"/><rect x="32" y="52" width="2" height="1" fill="#000" opacity="1"/><rect x="34" y="52" width="1" height="1" fill="#000" opacity="0.8"/><rect x="35" y="52" width="2" height="1" fill="#000" opacity="1"/><rect x="41" y="52" width="1" height="1" fill="#000" opacity="0.8"/><rect x="9" y="56" width="1" height="1" fill="#000" opacity="0.85"/><rect x="10" y="56" width="2" height="1" fill="#000" opacity="0.85"/><rect x="12" y="56" width="3" height="1" fill="#000" opacity="0.85"/><rect x="15" y="56" width="1" height="1" fill="#000" opacity="1"/><rect x="16" y="56" width="3" height="1" fill="#000" opacity="0.7"/><rect x="19" y="56" width="3" height="1" fill="#000" opacity="0.85"/><rect x="24" y="56" width="2" height="1" fill="#000" opacity="1"/><rect x="26" y="56" width="2" height="1" fill="#000" opacity="1"/><rect x="26" y="55" width="1" height="1" fill="#000" opacity="0.4"/><rect x="28" y="56" width="2" height="1" fill="#000" opacity="1"/><rect x="31" y="56" width="1" height="1" fill="#000" opacity="1"/><rect x="32" y="56" width="2" height="1" fill="#000" opacity="0.7"/><rect x="32" y="57" width="1" height="1" fill="#000" opacity="0.6"/><rect x="34" y="56" width="3" height="1" fill="#000" opacity="0.85"/><rect x="34" y="55" width="1" height="1" fill="#000" opacity="0.25"/><rect x="37" y="56" width="2" height="1" fill="#000" opacity="1"/><rect x="39" y="56" width="3" height="1" fill="#000" opacity="0.85"/><rect x="39" y="57" width="1" height="1" fill="#000" opacity="0.4"/></svg></div><div class="tbadge" style="top:269px">2</div><div class="thumb" style="top:293px"><svg class="tsvg" shape-rendering="crispEdges" width="50" height="64" viewBox="0 0 50 64"><rect x="14" y="7" width="1" height="1" fill="#000" opacity="0.45"/><rect x="16" y="7" width="1" height="1" fill="#000" opacity="0.6"/><rect x="20" y="7" width="1" height="1" fill="#000" opacity="1"/><rect x="20" y="8" width="1" height="1" fill="#000" opacity="0.6"/><rect x="23" y="7" width="1" height="1" fill="#000" opacity="0.8"/><rect x="23" y="6" width="1" height="1" fill="#000" opacity="0.4"/><rect x="24" y="7" width="1" height="1" fill="#000" opacity="0.45"/><rect x="29" y="7" width="2" height="1" fill="#000" opacity="0.45"/><rect x="31" y="7" width="1" height="1" fill="#000" opacity="0.6"/><rect x="36" y="7" width="1" height="1" fill="#000" opacity="0.6"/><rect x="36" y="8" width="1" height="1" fill="#000" opacity="0.4"/><rect x="37" y="7" width="1" height="1" fill="#000" opacity="0.45"/><rect x="9" y="11" width="2" height="1" fill="#000" opacity="0.7"/><rect x="11" y="11" width="2" height="1" fill="#000" opacity="1"/><rect x="13" y="11" width="2" height="1" fill="#000" opacity="1"/><rect x="15" y="11" width="2" height="1" fill="#000" opacity="1"/><rect x="15" y="10" width="1" height="1" fill="#000" opacity="0.25"/><rect x="19" y="11" width="1" height="1" fill="#000" opacity="0.7"/><rect x="19" y="10" width="1" height="1" fill="#000" opacity="0.25"/><rect x="23" y="11" width="2" height="1" fill="#000" opacity="0.7"/><rect x="25" y="11" width="1" height="1" fill="#000" opacity="0.7"/><rect x="26" y="11" width="1" height="1" fill="#000" opacity="1"/><rect x="26" y="12" width="1" height="1" fill="#000" opacity="0.25"/><rect x="27" y="11" width="1" height="1" fill="#000" opacity="0.85"/><rect x="28" y="11" width="1" height="1" fill="#000" opacity="1"/><rect x="29" y="11" width="2" height="1" fill="#000" opacity="0.85"/><rect x="29" y="12" width="1" height="1" fill="#000" opacity="0.6"/><rect x="32" y="11" width="1" height="1" fill="#000" opacity="1"/><rect x="33" y="11" width="2" height="1" fill="#000" opacity="0.7"/><rect x="33" y="10" width="1" height="1" fill="#000" opacity="0.6"/><rect x="36" y="11" width="1" height="1" fill="#000" opacity="1"/><rect x="37" y="11" width="1" height="1" fill="#000" opacity="1"/><rect x="38" y="11" width="1" height="1" fill="#000" opacity="0.85"/><rect x="38" y="12" width="1" height="1" fill="#000" opacity="0.4"/><rect x="40" y="11" width="2" height="1" fill="#000" opacity="0.85"/><rect x="12" y="14" width="1" height="1" fill="#000" opacity="0.6"/><rect x="15" y="14" width="1" height="1" fill="#000" opacity="1"/><rect x="15" y="15" width="1" height="1" fill="#000" opacity="0.25"/><rect x="16" y="14" width="1" height="1" fill="#000" opacity="0.6"/><rect x="18" y="14" width="1" height="1" fill="#000" opacity="0.6"/><rect x="23" y="14" width="1" height="1" fill="#000" opacity="0.6"/><rect x="24" y="14" width="1" height="1" fill="#000" opacity="1"/><rect x="27" y="14" width="1" height="1" fill="#000" opacity="1"/><rect x="27" y="15" width="1" height="1" fill="#000" opacity="0.4"/><rect x="28" y="14" width="1" height="1" fill="#000" opacity="0.6"/><rect x="28" y="15" width="1" height="1" fill="#000" opacity="0.25"/><rect x="29" y="14" width="1" height="1" fill="#000" opacity="0.45"/><rect x="32" y="14" width="1" height="1" fill="#000" opacity="0.6"/><rect x="34" y="14" width="2" height="1" fill="#000" opacity="0.45"/><rect x="36" y="14" width="2" height="1" fill="#000" opacity="1"/><rect x="40" y="14" width="1" height="1" fill="#000" opacity="0.6"/><rect x="41" y="14" width="1" height="1" fill="#000" opacity="0.8"/><rect x="10" y="18" width="1" height="1" fill="#000" opacity="0.8"/><rect x="10" y="19" width="1" height="1" fill="#000" opacity="0.6"/><rect x="11" y="18" width="2" height="1" fill="#000" opacity="0.45"/><rect x="13" y="18" width="1" height="1" fill="#000" opacity="0.45"/><rect x="17" y="18" width="1" height="1" fill="#000" opacity="1"/><rect x="19" y="18" width="1" height="1" fill="#000" opacity="0.6"/><rect x="21" y="18" width="1" height="1" fill="#000" opacity="1"/><rect x="24" y="18" width="1" height="1" fill="#000" opacity="0.8"/><rect x="25" y="18" width="1" height="1" fill="#000" opacity="1"/><rect x="28" y="18" width="2" height="1" fill="#000" opacity="0.45"/><rect x="30" y="18" width="1" height="1" fill="#000" opacity="0.6"/><rect x="32" y="18" width="1" height="1" fill="#000" opacity="0.6"/><rect x="32" y="19" width="1" height="1" fill="#000" opacity="0.25"/><rect x="34" y="18" width="1" height="1" fill="#000" opacity="1"/><rect x="41" y="18" width="1" height="1" fill="#000" opacity="0.8"/><rect x="13" y="21" width="1" height="1" fill="#000" opacity="0.8"/><rect x="13" y="20" width="1" height="1" fill="#000" opacity="0.4"/><rect x="14" y="21" width="1" height="1" fill="#000" opacity="0.8"/><rect x="14" y="22" width="1" height="1" fill="#000" opacity="0.6"/><rect x="15" y="21" width="1" height="1" fill="#000" opacity="0.8"/><rect x="15" y="20" width="1" height="1" fill="#000" opacity="0.4"/><rect x="16" y="21" width="1" height="1" fill="#000" opacity="0.8"/><rect x="18" y="21" width="1" height="1" fill="#000" opacity="0.8"/><rect x="22" y="21" width="1" height="1" fill="#000" opacity="1"/><rect x="23" y="21" width="2" height="1" fill="#000" opacity="1"/><rect x="25" y="21" width="1" height="1" fill="#000" opacity="0.6"/><rect x="25" y="22" width="1" height="1" fill="#000" opacity="0.6"/><rect x="28" y="21" width="1" height="1" fill="#000" opacity="0.8"/><rect x="30" y="21" width="1" height="1" fill="#000" opacity="0.8"/><rect x="30" y="20" width="1" height="1" fill="#000" opacity="0.25"/><rect x="33" y="21" width="1" height="1" fill="#000" opacity="1"/><rect x="34" y="21" width="1" height="1" fill="#000" opacity="0.6"/><rect x="39" y="21" width="1" height="1" fill="#000" opacity="0.8"/><rect x="11" y="25" width="1" height="1" fill="#000" opacity="1"/><rect x="12" y="25" width="3" height="1" fill="#000" opacity="0.7"/><rect x="16" y="25" width="2" height="1" fill="#000" opacity="1"/><rect x="18" y="25" width="2" height="1" fill="#000" opacity="1"/><rect x="20" y="25" width="2" height="1" fill="#000" opacity="1"/><rect x="22" y="25" width="3" height="1" fill="#000" opacity="1"/><rect x="25" y="25" width="2" height="1" fill="#000" opacity="1"/><rect x="27" y="25" width="2" height="1" fill="#000" opacity="0.85"/><rect x="29" y="25" width="1" height="1" fill="#000" opacity="0.7"/><rect x="30" y="25" width="3" height="1" fill="#000" opacity="0.85"/><rect x="33" y="25" width="2" height="1" fill="#000" opacity="0.7"/><rect x="33" y="26" width="1" height="1" fill="#000" opacity="0.6"/><rect x="36" y="25" width="3" height="1" fill="#000" opacity="1"/><rect x="40" y="25" width="2" height="1" fill="#000" opacity="1"/><rect x="9" y="28" width="1" height="1" fill="#000" opacity="1"/><rect x="12" y="28" width="1" height="1" fill="#000" opacity="1"/><rect x="14" y="28" width="1" height="1" fill="#000" opacity="1"/><rect x="18" y="28" width="1" height="1" fill="#000" opacity="0.6"/><rect x="19" y="28" width="1" height="1" fill="#000" opacity="0.8"/><rect x="20" y="28" width="1" height="1" fill="#000" opacity="0.8"/><rect x="24" y="28" width="1" height="1" fill="#000" opacity="0.6"/><rect x="25" y="28" width="1" height="1" fill="#000" opacity="0.45"/><rect x="27" y="28" width="1" height="1" fill="#000" opacity="1"/><rect x="27" y="27" width="1" height="1" fill="#000" opacity="0.4"/><rect x="32" y="28" width="1" height="1" fill="#000" opacity="0.45"/><rect x="32" y="29" width="1" height="1" fill="#000" opacity="0.6"/><rect x="37" y="28" width="1" height="1" fill="#000" opacity="1"/><rect x="38" y="28" width="1" height="1" fill="#000" opacity="0.45"/><rect x="38" y="27" width="1" height="1" fill="#000" opacity="0.6"/><rect x="13" y="32" width="1" height="1" fill="#000" opacity="0.8"/><rect x="14" y="32" width="1" height="1" fill="#000" opacity="0.45"/><rect x="17" y="32" width="2" height="1" fill="#000" opacity="0.45"/><rect x="20" y="32" width="1" height="1" fill="#000" opacity="0.6"/><rect x="22" y="32" width="2" height="1" fill="#000" opacity="0.8"/><rect x="24" y="32" width="2" height="1" fill="#000" opacity="0.45"/><rect x="24" y="33" width="1" height="1" fill="#000" opacity="0.6"/><rect x="27" y="32" width="1" height="1" fill="#000" opacity="1"/><rect x="30" y="32" width="1" height="1" fill="#000" opacity="0.6"/><rect x="31" y="32" width="1" height="1" fill="#000" opacity="1"/><rect x="32" y="32" width="2" height="1" fill="#000" opacity="0.8"/><rect x="34" y="32" width="1" height="1" fill="#000" opacity="1"/><rect x="35" y="32" width="1" height="1" fill="#000" opacity="1"/><rect x="35" y="33" width="1" height="1" fill="#000" opacity="0.4"/><rect x="36" y="32" width="1" height="1" fill="#000" opacity="0.8"/><rect x="37" y="32" width="1" height="1" fill="#000" opacity="0.6"/><rect x="38" y="32" width="1" height="1" fill="#000" opacity="0.6"/><rect x="41" y="32" width="1" height="1" fill="#000" opacity="0.8"/><rect x="41" y="33" width="1" height="1" fill="#000" opacity="0.4"/><rect x="13" y="35" width="2" height="1" fill="#000" opacity="0.6"/><rect x="13" y="36" width="1" height="1" fill="#000" opacity="0.6"/><rect x="15" y="35" width="1" height="1" fill="#000" opacity="1"/><rect x="17" y="35" width="1" height="1" fill="#000" opacity="0.6"/><rect x="18" y="35" width="1" height="1" fill="#000" opacity="0.8"/><rect x="20" y="35" width="1" height="1" fill="#000" opacity="0.8"/><rect x="20" y="34" width="1" height="1" fill="#000" opacity="0.6"/><rect x="21" y="35" width="1" height="1" fill="#000" opacity="0.8"/><rect x="21" y="34" width="1" height="1" fill="#000" opacity="0.25"/><rect x="25" y="35" width="1" height="1" fill="#000" opacity="0.8"/><rect x="25" y="36" width="1" height="1" fill="#000" opacity="0.25"/><rect x="28" y="35" width="2" height="1" fill="#000" opacity="0.6"/><rect x="30" y="35" width="1" height="1" fill="#000" opacity="0.8"/><rect x="31" y="35" width="2" height="1" fill="#000" opacity="0.6"/><rect x="35" y="35" width="1" height="1" fill="#000" opacity="0.45"/><rect x="37" y="35" width="1" height="1" fill="#000" opacity="1"/><rect x="37" y="34" width="1" height="1" fill="#000" opacity="0.4"/><rect x="38" y="35" width="1" height="1" fill="#000" opacity="0.6"/><rect x="39" y="35" width="1" height="1" fill="#000" opacity="0.6"/><rect x="40" y="35" width="2" height="1" fill="#000" opacity="0.8"/><rect x="12" y="39" width="1" height="1" fill="#000" opacity="0.45"/><rect x="17" y="39" width="1" height="1" fill="#000" opacity="0.6"/><rect x="18" y="39" width="1" height="1" fill="#000" opacity="1"/><rect x="22" y="39" width="1" height="1" fill="#000" opacity="0.8"/><rect x="30" y="39" width="1" height="1" fill="#000" opacity="1"/><rect x="34" y="39" width="1" height="1" fill="#000" opacity="0.6"/><rect x="38" y="39" width="1" height="1" fill="#000" opacity="0.6"/><rect x="40" y="39" width="1" height="1" fill="#000" opacity="0.6"/><rect x="40" y="40" width="1" height="1" fill="#000" opacity="0.6"/><rect x="10" y="42" width="2" height="1" fill="#000" opacity="0.6"/><rect x="13" y="42" width="1" height="1" fill="#000" opacity="0.6"/><rect x="17" y="42" width="1" height="1" fill="#000" opacity="1"/><rect x="19" y="42" width="1" height="1" fill="#000" opacity="0.45"/><rect x="20" y="42" width="1" height="1" fill="#000" opacity="0.8"/><rect x="21" y="42" width="1" height="1" fill="#000" opacity="1"/><rect x="22" y="42" width="2" height="1" fill="#000" opacity="1"/><rect x="24" y="42" width="1" height="1" fill="#000" opacity="0.45"/><rect x="24" y="43" width="1" height="1" fill="#000" opacity="0.25"/><rect x="28" y="42" width="2" height="1" fill="#000" opacity="1"/><rect x="33" y="42" width="1" height="1" fill="#000" opacity="0.8"/><rect x="34" y="42" width="1" height="1" fill="#000" opacity="0.45"/><rect x="36" y="42" width="1" height="1" fill="#000" opacity="0.6"/><rect x="36" y="43" width="1" height="1" fill="#000" opacity="0.6"/><rect x="41" y="42" width="1" height="1" fill="#000" opacity="0.8"/><rect x="9" y="46" width="1" height="1" fill="#000" opacity="0.7"/><rect x="9" y="47" width="1" height="1" fill="#000" opacity="0.25"/><rect x="11" y="46" width="2" height="1" fill="#000" opacity="0.85"/><rect x="13" y="46" width="1" height="1" fill="#000" opacity="0.85"/><rect x="14" y="46" width="2" height="1" fill="#000" opacity="1"/><rect x="14" y="45" width="1" height="1" fill="#000" opacity="0.4"/><rect x="16" y="46" width="1" height="1" fill="#000" opacity="1"/><rect x="16" y="47" width="1" height="1" fill="#000" opacity="0.25"/><rect x="17" y="46" width="1" height="1" fill="#000" opacity="1"/><rect x="18" y="46" width="1" height="1" fill="#000" opacity="0.85"/><rect x="19" y="46" width="2" height="1" fill="#000" opacity="0.7"/><rect x="21" y="46" width="2" height="1" fill="#000" opacity="0.85"/><rect x="23" y="46" width="3" height="1" fill="#000" opacity="1"/><rect x="26" y="46" width="1" height="1" fill="#000" opacity="1"/><rect x="27" y="46" width="1" height="1" fill="#000" opacity="1"/><rect x="28" y="46" width="3" height="1" fill="#000" opacity="1"/><rect x="31" y="46" width="1" height="1" fill="#000" opacity="1"/><rect x="32" y="46" width="1" height="1" fill="#000" opacity="0.85"/><rect x="32" y="47" width="1" height="1" fill="#000" opacity="0.6"/><rect x="33" y="46" width="3" height="1" fill="#000" opacity="1"/><rect x="37" y="46" width="1" height="1" fill="#000" opacity="1"/><rect x="38" y="46" width="1" height="1" fill="#000" opacity="0.85"/><rect x="39" y="46" width="2" height="1" fill="#000" opacity="0.7"/><rect x="39" y="47" width="1" height="1" fill="#000" opacity="0.6"/><rect x="41" y="46" width="1" height="1" fill="#000" opacity="1"/><rect x="41" y="45" width="1" height="1" fill="#000" opacity="0.6"/><rect x="11" y="49" width="2" height="1" fill="#000" opacity="0.45"/><rect x="13" y="49" width="1" height="1" fill="#000" opacity="0.45"/><rect x="17" y="49" width="2" height="1" fill="#000" opacity="0.45"/><rect x="17" y="48" width="1" height="1" fill="#000" opacity="0.4"/><rect x="19" y="49" width="1" height="1" fill="#000" opacity="0.45"/><rect x="19" y="48" width="1" height="1" fill="#000" opacity="0.4"/><rect x="20" y="49" width="1" height="1" fill="#000" opacity="1"/><rect x="21" y="49" width="1" height="1" fill="#000" opacity="0.45"/><rect x="23" y="49" width="1" height="1" fill="#000" opacity="0.45"/><rect x="24" y="49" width="1" height="1" fill="#000" opacity="0.8"/><rect x="25" y="49" width="1" height="1" fill="#000" opacity="0.45"/><rect x="26" y="49" width="1" height="1" fill="#000" opacity="0.45"/><rect x="28" y="49" width="1" height="1" fill="#000" opacity="1"/><rect x="28" y="50" width="1" height="1" fill="#000" opacity="0.25"/><rect x="31" y="49" width="1" height="1" fill="#000" opacity="0.6"/><rect x="31" y="50" width="1" height="1" fill="#000" opacity="0.6"/><rect x="35" y="49" width="1" height="1" fill="#000" opacity="1"/><rect x="35" y="50" width="1" height="1" fill="#000" opacity="0.25"/><rect x="38" y="49" width="1" height="1" fill="#000" opacity="0.45"/><rect x="38" y="50" width="1" height="1" fill="#000" opacity="0.4"/><rect x="41" y="49" width="1" height="1" fill="#000" opacity="0.45"/><rect x="9" y="53" width="2" height="1" fill="#000" opacity="0.85"/><rect x="11" y="53" width="1" height="1" fill="#000" opacity="1"/><rect x="12" y="53" width="2" height="1" fill="#000" opacity="1"/><rect x="14" y="53" width="2" height="1" fill="#000" opacity="1"/><rect x="16" y="53" width="2" height="1" fill="#000" opacity="0.7"/><rect x="19" y="53" width="2" height="1" fill="#000" opacity="1"/><rect x="19" y="54" width="1" height="1" fill="#000" opacity="0.4"/><rect x="21" y="53" width="3" height="1" fill="#000" opacity="0.85"/><rect x="24" y="53" width="3" height="1" fill="#000" opacity="0.7"/><rect x="30" y="53" width="2" height="1" fill="#000" opacity="0.85"/><rect x="34" y="53" width="2" height="1" fill="#000" opacity="1"/><rect x="37" y="53" width="3" height="1" fill="#000" opacity="1"/></svg></div><div class="tnum" style="top:360px">3</div><div class="thumb" style="top:385px"><svg class="tsvg" shape-rendering="crispEdges" width="50" height="64" viewBox="0 0 50 64"><rect x="11" y="7" width="1" height="1" fill="#000" opacity="0.85"/><rect x="12" y="7" width="1" height="1" fill="#000" opacity="0.7"/><rect x="13" y="7" width="2" height="1" fill="#000" opacity="1"/><rect x="17" y="7" width="1" height="1" fill="#000" opacity="1"/><rect x="18" y="7" width="3" height="1" fill="#000" opacity="1"/><rect x="18" y="6" width="1" height="1" fill="#000" opacity="0.6"/><rect x="22" y="7" width="2" height="1" fill="#000" opacity="1"/><rect x="24" y="7" width="2" height="1" fill="#000" opacity="0.7"/><rect x="26" y="7" width="1" height="1" fill="#000" opacity="1"/><rect x="27" y="7" width="1" height="1" fill="#000" opacity="1"/><rect x="27" y="6" width="1" height="1" fill="#000" opacity="0.25"/><rect x="28" y="7" width="2" height="1" fill="#000" opacity="0.85"/><rect x="30" y="7" width="3" height="1" fill="#000" opacity="0.7"/><rect x="30" y="6" width="1" height="1" fill="#000" opacity="0.25"/><rect x="33" y="7" width="1" height="1" fill="#000" opacity="0.7"/><rect x="35" y="7" width="1" height="1" fill="#000" opacity="0.7"/><rect x="35" y="6" width="1" height="1" fill="#000" opacity="0.6"/><rect x="36" y="7" width="1" height="1" fill="#000" opacity="0.85"/><rect x="38" y="7" width="2" height="1" fill="#000" opacity="1"/><rect x="41" y="7" width="1" height="1" fill="#000" opacity="0.7"/><rect x="41" y="8" width="1" height="1" fill="#000" opacity="0.4"/><rect x="15" y="11" width="1" height="1" fill="#000" opacity="0.8"/><rect x="15" y="12" width="1" height="1" fill="#000" opacity="0.25"/><rect x="16" y="11" width="1" height="1" fill="#000" opacity="0.6"/><rect x="16" y="10" width="1" height="1" fill="#000" opacity="0.4"/><rect x="26" y="11" width="2" height="1" fill="#000" opacity="0.45"/><rect x="32" y="11" width="1" height="1" fill="#000" opacity="0.6"/><rect x="34" y="11" width="1" height="1" fill="#000" opacity="0.6"/><rect x="35" y="11" width="1" height="1" fill="#000" opacity="0.45"/><rect x="36" y="11" width="1" height="1" fill="#000" opacity="0.6"/><rect x="11" y="15" width="1" height="1" fill="#000" opacity="1"/><rect x="14" y="15" width="2" height="1" fill="#000" opacity="1"/><rect x="14" y="14" width="1" height="1" fill="#000" opacity="0.25"/><rect x="17" y="15" width="2" height="1" fill="#000" opacity="0.8"/><rect x="17" y="16" width="1" height="1" fill="#000" opacity="0.4"/><rect x="20" y="15" width="1" height="1" fill="#000" opacity="0.45"/><rect x="21" y="15" width="2" height="1" fill="#000" opacity="0.6"/><rect x="21" y="14" width="1" height="1" fill="#000" opacity="0.4"/><rect x="25" y="15" width="2" height="1" fill="#000" opacity="0.6"/><rect x="32" y="15" width="1" height="1" fill="#000" opacity="0.8"/><rect x="32" y="14" width="1" height="1" fill="#000" opacity="0.4"/><rect x="34" y="15" width="1" height="1" fill="#000" opacity="1"/><rect x="34" y="14" width="1" height="1" fill="#000" opacity="0.25"/><rect x="37" y="15" width="2" height="1" fill="#000" opacity="0.6"/><rect x="39" y="15" width="1" height="1" fill="#000" opacity="0.45"/><rect x="40" y="15" width="1" height="1" fill="#000" opacity="0.6"/><rect x="41" y="15" width="1" height="1" fill="#000" opacity="0.45"/><rect x="15" y="18" width="1" height="1" fill="#000" opacity="0.6"/><rect x="15" y="17" width="1" height="1" fill="#000" opacity="0.25"/><rect x="16" y="18" width="1" height="1" fill="#000" opacity="1"/><rect x="18" y="18" width="1" height="1" fill="#000" opacity="0.45"/><rect x="19" y="18" width="2" height="1" fill="#000" opacity="0.6"/><rect x="21" y="18" width="1" height="1" fill="#000" opacity="0.6"/><rect x="27" y="18" width="1" height="1" fill="#000" opacity="0.6"/><rect x="28" y="18" width="1" height="1" fill="#000" opacity="0.45"/><rect x="29" y="18" width="1" height="1" fill="#000" opacity="0.6"/><rect x="32" y="18" width="1" height="1" fill="#000" opacity="0.8"/><rect x="41" y="18" width="1" height="1" fill="#000" opacity="1"/><rect x="9" y="22" width="2" height="1" fill="#000" opacity="1"/><rect x="12" y="22" width="1" height="1" fill="#000" opacity="1"/><rect x="17" y="22" width="3" height="1" fill="#000" opacity="0.7"/><rect x="20" y="22" width="3" height="1" fill="#000" opacity="1"/><rect x="23" y="22" width="2" height="1" fill="#000" opacity="1"/><rect x="25" y="22" width="2" height="1" fill="#000" opacity="1"/><rect x="28" y="22" width="2" height="1" fill="#000" opacity="1"/><rect x="30" y="22" width="3" height="1" fill="#000" opacity="1"/><rect x="34" y="22" width="3" height="1" fill="#000" opacity="0.85"/><rect x="38" y="22" width="2" height="1" fill="#000" opacity="1"/><rect x="40" y="22" width="1" height="1" fill="#000" opacity="0.85"/><rect x="40" y="23" width="1" height="1" fill="#000" opacity="0.6"/><rect x="41" y="22" width="1" height="1" fill="#000" opacity="1"/><rect x="41" y="21" width="1" height="1" fill="#000" opacity="0.25"/><rect x="15" y="26" width="2" height="1" fill="#000" opacity="0.8"/><rect x="18" y="26" width="1" height="1" fill="#000" opacity="0.8"/><rect x="22" y="26" width="1" height="1" fill="#000" opacity="0.8"/><rect x="29" y="26" width="1" height="1" fill="#000" opacity="0.8"/><rect x="34" y="26" width="1" height="1" fill="#000" opacity="0.45"/><rect x="35" y="26" width="1" height="1" fill="#000" opacity="0.8"/><rect x="36" y="26" width="1" height="1" fill="#000" opacity="0.8"/><rect x="36" y="27" width="1" height="1" fill="#000" opacity="0.25"/><rect x="39" y="26" width="1" height="1" fill="#000" opacity="1"/><rect x="40" y="26" width="1" height="1" fill="#000" opacity="0.45"/><rect x="9" y="30" width="1" height="1" fill="#000" opacity="1"/><rect x="11" y="30" width="1" height="1" fill="#000" opacity="1"/><rect x="12" y="30" width="1" height="1" fill="#000" opacity="0.8"/><rect x="12" y="29" width="1" height="1" fill="#000" opacity="0.4"/><rect x="14" y="30" width="2" height="1" fill="#000" opacity="1"/><rect x="20" y="30" width="2" height="1" fill="#000" opacity="1"/><rect x="24" y="30" width="1" height="1" fill="#000" opacity="1"/><rect x="25" y="30" width="1" height="1" fill="#000" opacity="0.6"/><rect x="27" y="30" width="1" height="1" fill="#000" opacity="0.8"/><rect x="29" y="30" width="1" height="1" fill="#000" opacity="0.45"/><rect x="30" y="30" width="2" height="1" fill="#000" opacity="0.45"/><rect x="32" y="30" width="2" height="1" fill="#000" opacity="0.45"/><rect x="34" y="30" width="1" height="1" fill="#000" opacity="1"/><rect x="38" y="30" width="2" height="1" fill="#000" opacity="0.45"/><rect x="40" y="30" width="1" height="1" fill="#000" opacity="0.6"/><rect x="41" y="30" width="1" height="1" fill="#000" opacity="0.8"/><rect x="41" y="31" width="1" height="1" fill="#000" opacity="0.4"/><rect x="9" y="34" width="2" height="1" fill="#000" opacity="1"/><rect x="11" y="34" width="1" height="1" fill="#000" opacity="1"/><rect x="15" y="34" width="1" height="1" fill="#000" opacity="0.85"/><rect x="15" y="35" width="1" height="1" fill="#000" opacity="0.4"/><rect x="16" y="34" width="3" height="1" fill="#000" opacity="0.85"/><rect x="20" y="34" width="3" height="1" fill="#000" opacity="0.7"/><rect x="23" y="34" width="1" height="1" fill="#000" opacity="1"/><rect x="25" y="34" width="1" height="1" fill="#000" opacity="1"/><rect x="28" y="34" width="2" height="1" fill="#000" opacity="1"/><rect x="30" y="34" width="1" height="1" fill="#000" opacity="0.7"/><rect x="30" y="33" width="1" height="1" fill="#000" opacity="0.25"/><rect x="31" y="34" width="1" height="1" fill="#000" opacity="1"/><rect x="31" y="33" width="1" height="1" fill="#000" opacity="0.4"/><rect x="32" y="34" width="2" height="1" fill="#000" opacity="0.85"/><rect x="34" y="34" width="1" height="1" fill="#000" opacity="0.7"/><rect x="35" y="34" width="1" height="1" fill="#000" opacity="0.7"/><rect x="36" y="34" width="2" height="1" fill="#000" opacity="1"/><rect x="38" y="34" width="1" height="1" fill="#000" opacity="0.85"/><rect x="38" y="35" width="1" height="1" fill="#000" opacity="0.4"/><rect x="11" y="37" width="2" height="1" fill="#000" opacity="1"/><rect x="13" y="37" width="1" height="1" fill="#000" opacity="1"/><rect x="14" y="37" width="1" height="1" fill="#000" opacity="1"/><rect x="14" y="36" width="1" height="1" fill="#000" opacity="0.25"/><rect x="15" y="37" width="1" height="1" fill="#000" opacity="1"/><rect x="16" y="37" width="1" height="1" fill="#000" opacity="1"/><rect x="16" y="36" width="1" height="1" fill="#000" opacity="0.6"/><rect x="18" y="37" width="2" height="1" fill="#000" opacity="1"/><rect x="21" y="37" width="1" height="1" fill="#000" opacity="0.85"/><rect x="23" y="37" width="3" height="1" fill="#000" opacity="0.7"/><rect x="23" y="38" width="1" height="1" fill="#000" opacity="0.4"/><rect x="29" y="37" width="2" height="1" fill="#000" opacity="0.7"/><rect x="31" y="37" width="1" height="1" fill="#000" opacity="1"/><rect x="31" y="36" width="1" height="1" fill="#000" opacity="0.6"/><rect x="32" y="37" width="1" height="1" fill="#000" opacity="1"/><rect x="33" y="37" width="2" height="1" fill="#000" opacity="1"/><rect x="33" y="38" width="1" height="1" fill="#000" opacity="0.25"/><rect x="36" y="37" width="3" height="1" fill="#000" opacity="0.7"/><rect x="39" y="37" width="2" height="1" fill="#000" opacity="0.7"/><rect x="39" y="36" width="1" height="1" fill="#000" opacity="0.4"/><rect x="41" y="37" width="1" height="1" fill="#000" opacity="1"/><rect x="9" y="41" width="1" height="1" fill="#000" opacity="0.6"/><rect x="11" y="41" width="1" height="1" fill="#000" opacity="1"/><rect x="12" y="41" width="1" height="1" fill="#000" opacity="0.6"/><rect x="12" y="42" width="1" height="1" fill="#000" opacity="0.4"/><rect x="14" y="41" width="2" height="1" fill="#000" opacity="0.6"/><rect x="14" y="40" width="1" height="1" fill="#000" opacity="0.6"/><rect x="16" y="41" width="1" height="1" fill="#000" opacity="0.8"/><rect x="17" y="41" width="1" height="1" fill="#000" opacity="0.6"/><rect x="19" y="41" width="1" height="1" fill="#000" opacity="0.45"/><rect x="19" y="40" width="1" height="1" fill="#000" opacity="0.4"/><rect x="22" y="41" width="1" height="1" fill="#000" opacity="0.45"/><rect x="23" y="41" width="1" height="1" fill="#000" opacity="0.45"/><rect x="25" y="41" width="1" height="1" fill="#000" opacity="0.45"/><rect x="26" y="41" width="1" height="1" fill="#000" opacity="0.45"/><rect x="27" y="41" width="1" height="1" fill="#000" opacity="0.45"/><rect x="27" y="40" width="1" height="1" fill="#000" opacity="0.4"/><rect x="28" y="41" width="2" height="1" fill="#000" opacity="0.6"/><rect x="28" y="42" width="1" height="1" fill="#000" opacity="0.4"/><rect x="30" y="41" width="1" height="1" fill="#000" opacity="0.6"/><rect x="32" y="41" width="1" height="1" fill="#000" opacity="0.6"/><rect x="32" y="40" width="1" height="1" fill="#000" opacity="0.6"/><rect x="33" y="41" width="1" height="1" fill="#000" opacity="0.45"/><rect x="40" y="41" width="1" height="1" fill="#000" opacity="0.8"/><rect x="41" y="41" width="1" height="1" fill="#000" opacity="0.6"/><rect x="12" y="45" width="1" height="1" fill="#000" opacity="0.45"/><rect x="20" y="45" width="1" height="1" fill="#000" opacity="0.45"/><rect x="22" y="45" width="1" height="1" fill="#000" opacity="0.6"/><rect x="22" y="46" width="1" height="1" fill="#000" opacity="0.6"/><rect x="23" y="45" width="2" height="1" fill="#000" opacity="0.45"/><rect x="30" y="45" width="1" height="1" fill="#000" opacity="0.6"/><rect x="32" y="45" width="2" height="1" fill="#000" opacity="0.8"/><rect x="32" y="46" width="1" height="1" fill="#000" opacity="0.6"/><rect x="34" y="45" width="1" height="1" fill="#000" opacity="1"/><rect x="37" y="45" width="1" height="1" fill="#000" opacity="0.45"/><rect x="10" y="49" width="1" height="1" fill="#000" opacity="0.8"/><rect x="10" y="50" width="1" height="1" fill="#000" opacity="0.4"/><rect x="13" y="49" width="1" height="1" fill="#000" opacity="1"/><rect x="14" y="49" width="1" height="1" fill="#000" opacity="0.8"/><rect x="16" y="49" width="2" height="1" fill="#000" opacity="0.8"/><rect x="21" y="49" width="1" height="1" fill="#000" opacity="1"/><rect x="22" y="49" width="1" height="1" fill="#000" opacity="0.45"/><rect x="25" y="49" width="1" height="1" fill="#000" opacity="0.45"/><rect x="29" y="49" width="1" height="1" fill="#000" opacity="1"/><rect x="29" y="50" width="1" height="1" fill="#000" opacity="0.4"/><rect x="30" y="49" width="1" height="1" fill="#000" opacity="0.8"/><rect x="35" y="49" width="2" height="1" fill="#000" opacity="1"/><rect x="38" y="49" width="1" height="1" fill="#000" opacity="1"/></svg></div><div class="tnum" style="top:452px">4</div><div class="thumb" style="top:477px"><svg class="tsvg" shape-rendering="crispEdges" width="50" height="64" viewBox="0 0 50 64"><rect x="9" y="8" width="2" height="1" fill="#000" opacity="1"/><rect x="9" y="9" width="1" height="1" fill="#000" opacity="0.4"/><rect x="11" y="8" width="3" height="1" fill="#000" opacity="0.7"/><rect x="14" y="8" width="3" height="1" fill="#000" opacity="1"/><rect x="14" y="7" width="1" height="1" fill="#000" opacity="0.8"/><rect x="17" y="8" width="3" height="1" fill="#000" opacity="1"/><rect x="17" y="9" width="1" height="1" fill="#000" opacity="0.8"/><rect x="20" y="8" width="2" height="1" fill="#000" opacity="1"/><rect x="20" y="9" width="1" height="1" fill="#000" opacity="0.8"/><rect x="22" y="8" width="1" height="1" fill="#000" opacity="0.85"/><rect x="22" y="7" width="1" height="1" fill="#000" opacity="0.6"/><rect x="24" y="8" width="2" height="1" fill="#000" opacity="0.7"/><rect x="24" y="9" width="1" height="1" fill="#000" opacity="0.8"/><rect x="26" y="8" width="2" height="1" fill="#000" opacity="1"/><rect x="26" y="9" width="1" height="1" fill="#000" opacity="0.6"/><rect x="28" y="8" width="2" height="1" fill="#000" opacity="1"/><rect x="28" y="9" width="1" height="1" fill="#000" opacity="0.6"/><rect x="30" y="8" width="3" height="1" fill="#000" opacity="1"/><rect x="30" y="9" width="2" height="1" fill="#000" opacity="0.4"/><rect x="34" y="8" width="1" height="1" fill="#000" opacity="1"/><rect x="35" y="8" width="3" height="1" fill="#000" opacity="1"/><rect x="38" y="8" width="2" height="1" fill="#000" opacity="1"/><rect x="38" y="9" width="2" height="1" fill="#000" opacity="0.4"/><rect x="40" y="8" width="1" height="1" fill="#000" opacity="0.7"/><rect x="40" y="9" width="1" height="1" fill="#000" opacity="0.8"/><rect x="9" y="14" width="1" height="1" fill="#000" opacity="0.45"/><rect x="10" y="14" width="2" height="1" fill="#000" opacity="0.45"/><rect x="12" y="14" width="1" height="1" fill="#000" opacity="0.45"/><rect x="13" y="14" width="1" height="1" fill="#000" opacity="1"/><rect x="13" y="15" width="1" height="1" fill="#000" opacity="0.4"/><rect x="15" y="14" width="2" height="1" fill="#000" opacity="0.8"/><rect x="15" y="15" width="2" height="1" fill="#000" opacity="0.4"/><rect x="18" y="14" width="1" height="1" fill="#000" opacity="0.6"/><rect x="18" y="15" width="1" height="1" fill="#000" opacity="0.8"/><rect x="23" y="14" width="1" height="1" fill="#000" opacity="0.6"/><rect x="23" y="15" width="1" height="1" fill="#000" opacity="0.8"/><rect x="26" y="14" width="1" height="1" fill="#000" opacity="0.6"/><rect x="26" y="15" width="2" height="1" fill="#000" opacity="0.6"/><rect x="33" y="14" width="1" height="1" fill="#000" opacity="0.45"/><rect x="33" y="13" width="1" height="1" fill="#000" opacity="0.6"/><rect x="34" y="14" width="2" height="1" fill="#000" opacity="0.6"/><rect x="34" y="13" width="1" height="1" fill="#000" opacity="0.8"/><rect x="38" y="14" width="2" height="1" fill="#000" opacity="0.45"/><rect x="38" y="15" width="2" height="1" fill="#000" opacity="0.6"/><rect x="9" y="18" width="3" height="1" fill="#000" opacity="0.85"/><rect x="9" y="17" width="1" height="1" fill="#000" opacity="0.4"/><rect x="12" y="18" width="3" height="1" fill="#000" opacity="1"/><rect x="12" y="17" width="2" height="1" fill="#000" opacity="0.6"/><rect x="16" y="18" width="2" height="1" fill="#000" opacity="1"/><rect x="16" y="19" width="1" height="1" fill="#000" opacity="0.8"/><rect x="22" y="18" width="2" height="1" fill="#000" opacity="0.7"/><rect x="22" y="17" width="1" height="1" fill="#000" opacity="0.6"/><rect x="26" y="18" width="1" height="1" fill="#000" opacity="1"/><rect x="26" y="17" width="1" height="1" fill="#000" opacity="0.4"/><rect x="27" y="18" width="1" height="1" fill="#000" opacity="0.7"/><rect x="28" y="18" width="2" height="1" fill="#000" opacity="0.85"/><rect x="32" y="18" width="2" height="1" fill="#000" opacity="0.7"/><rect x="36" y="18" width="1" height="1" fill="#000" opacity="1"/><rect x="36" y="19" width="2" height="1" fill="#000" opacity="0.6"/><rect x="37" y="18" width="3" height="1" fill="#000" opacity="1"/><rect x="40" y="18" width="1" height="1" fill="#000" opacity="0.85"/><rect x="40" y="19" width="1" height="1" fill="#000" opacity="0.8"/><rect x="41" y="18" width="1" height="1" fill="#000" opacity="1"/><rect x="41" y="17" width="1" height="1" fill="#000" opacity="0.6"/><rect x="10" y="24" width="1" height="1" fill="#000" opacity="0.8"/><rect x="10" y="23" width="1" height="1" fill="#000" opacity="0.8"/><rect x="13" y="24" width="1" height="1" fill="#000" opacity="0.45"/><rect x="14" y="24" width="1" height="1" fill="#000" opacity="1"/><rect x="16" y="24" width="2" height="1" fill="#000" opacity="0.6"/><rect x="16" y="23" width="1" height="1" fill="#000" opacity="0.8"/><rect x="19" y="24" width="1" height="1" fill="#000" opacity="0.45"/><rect x="19" y="23" width="1" height="1" fill="#000" opacity="0.8"/><rect x="21" y="24" width="1" height="1" fill="#000" opacity="0.8"/><rect x="21" y="25" width="1" height="1" fill="#000" opacity="0.8"/><rect x="23" y="24" width="1" height="1" fill="#000" opacity="0.8"/><rect x="23" y="23" width="1" height="1" fill="#000" opacity="0.8"/><rect x="35" y="24" width="1" height="1" fill="#000" opacity="1"/><rect x="35" y="25" width="2" height="1" fill="#000" opacity="0.4"/><rect x="36" y="24" width="2" height="1" fill="#000" opacity="1"/><rect x="36" y="23" width="1" height="1" fill="#000" opacity="0.4"/><rect x="38" y="24" width="1" height="1" fill="#000" opacity="0.45"/><rect x="38" y="23" width="1" height="1" fill="#000" opacity="0.4"/><rect x="40" y="24" width="1" height="1" fill="#000" opacity="0.45"/><rect x="10" y="29" width="1" height="1" fill="#000" opacity="1"/><rect x="10" y="28" width="2" height="1" fill="#000" opacity="0.4"/><rect x="11" y="29" width="3" height="1" fill="#000" opacity="0.85"/><rect x="11" y="30" width="1" height="1" fill="#000" opacity="0.8"/><rect x="17" y="29" width="1" height="1" fill="#000" opacity="0.7"/><rect x="17" y="28" width="2" height="1" fill="#000" opacity="0.4"/><rect x="18" y="29" width="3" height="1" fill="#000" opacity="1"/><rect x="18" y="28" width="2" height="1" fill="#000" opacity="0.8"/><rect x="21" y="29" width="1" height="1" fill="#000" opacity="1"/><rect x="21" y="28" width="2" height="1" fill="#000" opacity="0.6"/><rect x="23" y="29" width="1" height="1" fill="#000" opacity="1"/><rect x="23" y="28" width="2" height="1" fill="#000" opacity="0.4"/><rect x="26" y="29" width="2" height="1" fill="#000" opacity="1"/><rect x="26" y="30" width="1" height="1" fill="#000" opacity="0.6"/><rect x="28" y="29" width="2" height="1" fill="#000" opacity="0.85"/><rect x="28" y="28" width="1" height="1" fill="#000" opacity="0.4"/><rect x="30" y="29" width="3" height="1" fill="#000" opacity="0.85"/><rect x="30" y="30" width="1" height="1" fill="#000" opacity="0.8"/><rect x="33" y="29" width="1" height="1" fill="#000" opacity="0.7"/><rect x="36" y="29" width="1" height="1" fill="#000" opacity="1"/><rect x="37" y="29" width="3" height="1" fill="#000" opacity="1"/><rect x="37" y="28" width="1" height="1" fill="#000" opacity="0.6"/><rect x="41" y="29" width="1" height="1" fill="#000" opacity="0.7"/><rect x="41" y="28" width="2" height="1" fill="#000" opacity="0.8"/><rect x="14" y="35" width="1" height="1" fill="#000" opacity="0.45"/><rect x="14" y="34" width="1" height="1" fill="#000" opacity="0.4"/><rect x="16" y="35" width="1" height="1" fill="#000" opacity="0.45"/><rect x="21" y="35" width="1" height="1" fill="#000" opacity="1"/><rect x="21" y="36" width="1" height="1" fill="#000" opacity="0.8"/><rect x="22" y="35" width="2" height="1" fill="#000" opacity="0.6"/><rect x="22" y="34" width="2" height="1" fill="#000" opacity="0.8"/><rect x="30" y="35" width="1" height="1" fill="#000" opacity="0.6"/><rect x="30" y="34" width="2" height="1" fill="#000" opacity="0.6"/><rect x="32" y="35" width="1" height="1" fill="#000" opacity="1"/><rect x="32" y="34" width="2" height="1" fill="#000" opacity="0.8"/><rect x="33" y="35" width="2" height="1" fill="#000" opacity="0.6"/><rect x="33" y="34" width="1" height="1" fill="#000" opacity="0.8"/><rect x="40" y="35" width="1" height="1" fill="#000" opacity="0.45"/><rect x="40" y="36" width="1" height="1" fill="#000" opacity="0.4"/><rect x="10" y="41" width="1" height="1" fill="#000" opacity="0.6"/><rect x="10" y="42" width="2" height="1" fill="#000" opacity="0.8"/><rect x="12" y="41" width="2" height="1" fill="#000" opacity="0.6"/><rect x="14" y="41" width="2" height="1" fill="#000" opacity="1"/><rect x="14" y="40" width="1" height="1" fill="#000" opacity="0.8"/><rect x="19" y="41" width="1" height="1" fill="#000" opacity="0.45"/><rect x="19" y="40" width="1" height="1" fill="#000" opacity="0.4"/><rect x="22" y="41" width="1" height="1" fill="#000" opacity="0.6"/><rect x="22" y="40" width="1" height="1" fill="#000" opacity="0.8"/><rect x="24" y="41" width="1" height="1" fill="#000" opacity="0.6"/><rect x="24" y="42" width="1" height="1" fill="#000" opacity="0.4"/><rect x="25" y="41" width="1" height="1" fill="#000" opacity="0.6"/><rect x="25" y="42" width="1" height="1" fill="#000" opacity="0.6"/><rect x="27" y="41" width="1" height="1" fill="#000" opacity="0.8"/><rect x="27" y="40" width="1" height="1" fill="#000" opacity="0.6"/><rect x="29" y="41" width="1" height="1" fill="#000" opacity="0.6"/><rect x="29" y="40" width="1" height="1" fill="#000" opacity="0.4"/><rect x="30" y="41" width="2" height="1" fill="#000" opacity="0.45"/><rect x="30" y="40" width="1" height="1" fill="#000" opacity="0.6"/><rect x="33" y="41" width="2" height="1" fill="#000" opacity="0.8"/><rect x="35" y="41" width="2" height="1" fill="#000" opacity="0.8"/><rect x="35" y="40" width="1" height="1" fill="#000" opacity="0.6"/><rect x="38" y="41" width="2" height="1" fill="#000" opacity="0.45"/><rect x="38" y="42" width="1" height="1" fill="#000" opacity="0.4"/><rect x="41" y="41" width="1" height="1" fill="#000" opacity="0.45"/><rect x="41" y="42" width="1" height="1" fill="#000" opacity="0.6"/><rect x="15" y="46" width="1" height="1" fill="#000" opacity="1"/><rect x="20" y="46" width="2" height="1" fill="#000" opacity="0.45"/><rect x="20" y="45" width="2" height="1" fill="#000" opacity="0.6"/><rect x="22" y="46" width="1" height="1" fill="#000" opacity="1"/><rect x="22" y="47" width="2" height="1" fill="#000" opacity="0.4"/><rect x="23" y="46" width="2" height="1" fill="#000" opacity="0.8"/><rect x="23" y="47" width="2" height="1" fill="#000" opacity="0.6"/><rect x="25" y="46" width="2" height="1" fill="#000" opacity="1"/><rect x="25" y="45" width="2" height="1" fill="#000" opacity="0.8"/><rect x="31" y="46" width="1" height="1" fill="#000" opacity="1"/><rect x="31" y="45" width="2" height="1" fill="#000" opacity="0.6"/><rect x="32" y="46" width="1" height="1" fill="#000" opacity="0.45"/><rect x="33" y="46" width="1" height="1" fill="#000" opacity="0.6"/><rect x="33" y="47" width="2" height="1" fill="#000" opacity="0.4"/><rect x="36" y="46" width="1" height="1" fill="#000" opacity="0.6"/><rect x="36" y="47" width="2" height="1" fill="#000" opacity="0.4"/><rect x="40" y="46" width="2" height="1" fill="#000" opacity="0.6"/><rect x="40" y="47" width="2" height="1" fill="#000" opacity="0.8"/><rect x="14" y="52" width="2" height="1" fill="#000" opacity="0.6"/><rect x="14" y="53" width="1" height="1" fill="#000" opacity="0.4"/><rect x="18" y="52" width="1" height="1" fill="#000" opacity="0.8"/><rect x="18" y="51" width="2" height="1" fill="#000" opacity="0.6"/><rect x="20" y="52" width="1" height="1" fill="#000" opacity="0.6"/><rect x="20" y="53" width="2" height="1" fill="#000" opacity="0.6"/><rect x="23" y="52" width="1" height="1" fill="#000" opacity="0.6"/><rect x="23" y="53" width="1" height="1" fill="#000" opacity="0.4"/><rect x="26" y="52" width="1" height="1" fill="#000" opacity="0.45"/><rect x="26" y="53" width="1" height="1" fill="#000" opacity="0.4"/><rect x="28" y="52" width="2" height="1" fill="#000" opacity="0.8"/><rect x="33" y="52" width="2" height="1" fill="#000" opacity="0.45"/><rect x="33" y="51" width="1" height="1" fill="#000" opacity="0.6"/><rect x="35" y="52" width="1" height="1" fill="#000" opacity="0.6"/><rect x="35" y="53" width="1" height="1" fill="#000" opacity="0.8"/><rect x="38" y="52" width="1" height="1" fill="#000" opacity="1"/><rect x="38" y="53" width="2" height="1" fill="#000" opacity="0.8"/><rect x="39" y="52" width="1" height="1" fill="#000" opacity="0.8"/><rect x="39" y="51" width="2" height="1" fill="#000" opacity="0.6"/><rect x="41" y="52" width="1" height="1" fill="#000" opacity="0.45"/><rect x="11" y="56" width="2" height="1" fill="#000" opacity="0.6"/><rect x="11" y="55" width="1" height="1" fill="#000" opacity="0.6"/><rect x="18" y="56" width="1" height="1" fill="#000" opacity="1"/><rect x="18" y="55" width="2" height="1" fill="#000" opacity="0.6"/><rect x="20" y="56" width="1" height="1" fill="#000" opacity="0.8"/><rect x="24" y="56" width="1" height="1" fill="#000" opacity="0.6"/><rect x="25" y="56" width="1" height="1" fill="#000" opacity="1"/><rect x="25" y="55" width="1" height="1" fill="#000" opacity="0.8"/><rect x="31" y="56" width="2" height="1" fill="#000" opacity="0.45"/><rect x="31" y="55" width="1" height="1" fill="#000" opacity="0.6"/><rect x="33" y="56" width="1" height="1" fill="#000" opacity="0.6"/><rect x="33" y="55" width="1" height="1" fill="#000" opacity="0.6"/><rect x="35" y="56" width="1" height="1" fill="#000" opacity="1"/><rect x="38" y="56" width="1" height="1" fill="#000" opacity="1"/><rect x="39" y="56" width="1" height="1" fill="#000" opacity="0.45"/><rect x="40" y="56" width="1" height="1" fill="#000" opacity="0.45"/><rect x="40" y="55" width="1" height="1" fill="#000" opacity="0.8"/></svg></div><div class="tnum" style="top:544px">5</div><div class="thumb" style="top:569px"><svg class="tsvg" shape-rendering="crispEdges" width="50" height="64" viewBox="0 0 50 64"><rect x="9" y="8" width="1" height="1" fill="#000" opacity="0.7"/><rect x="9" y="7" width="1" height="1" fill="#000" opacity="0.4"/><rect x="10" y="8" width="1" height="1" fill="#000" opacity="1"/><rect x="10" y="9" width="2" height="1" fill="#000" opacity="0.6"/><rect x="12" y="8" width="1" height="1" fill="#000" opacity="1"/><rect x="12" y="7" width="1" height="1" fill="#000" opacity="0.8"/><rect x="13" y="8" width="2" height="1" fill="#000" opacity="0.85"/><rect x="15" y="8" width="2" height="1" fill="#000" opacity="1"/><rect x="15" y="7" width="1" height="1" fill="#000" opacity="0.8"/><rect x="17" y="8" width="2" height="1" fill="#000" opacity="0.7"/><rect x="17" y="7" width="1" height="1" fill="#000" opacity="0.4"/><rect x="19" y="8" width="1" height="1" fill="#000" opacity="0.85"/><rect x="20" y="8" width="2" height="1" fill="#000" opacity="0.85"/><rect x="20" y="9" width="2" height="1" fill="#000" opacity="0.6"/><rect x="22" y="8" width="1" height="1" fill="#000" opacity="0.85"/><rect x="22" y="9" width="1" height="1" fill="#000" opacity="0.6"/><rect x="23" y="8" width="3" height="1" fill="#000" opacity="1"/><rect x="26" y="8" width="1" height="1" fill="#000" opacity="0.85"/><rect x="26" y="7" width="2" height="1" fill="#000" opacity="0.8"/><rect x="27" y="8" width="3" height="1" fill="#000" opacity="0.85"/><rect x="30" y="8" width="2" height="1" fill="#000" opacity="1"/><rect x="30" y="7" width="1" height="1" fill="#000" opacity="0.6"/><rect x="34" y="8" width="2" height="1" fill="#000" opacity="1"/><rect x="34" y="9" width="1" height="1" fill="#000" opacity="0.8"/><rect x="36" y="8" width="2" height="1" fill="#000" opacity="0.7"/><rect x="36" y="7" width="1" height="1" fill="#000" opacity="0.4"/><rect x="40" y="8" width="1" height="1" fill="#000" opacity="1"/><rect x="40" y="9" width="2" height="1" fill="#000" opacity="0.8"/><rect x="41" y="8" width="1" height="1" fill="#000" opacity="0.7"/><rect x="41" y="7" width="2" height="1" fill="#000" opacity="0.6"/><rect x="10" y="13" width="1" height="1" fill="#000" opacity="1"/><rect x="10" y="14" width="2" height="1" fill="#000" opacity="0.6"/><rect x="12" y="13" width="2" height="1" fill="#000" opacity="0.8"/><rect x="12" y="12" width="1" height="1" fill="#000" opacity="0.4"/><rect x="15" y="13" width="1" height="1" fill="#000" opacity="0.6"/><rect x="15" y="12" width="1" height="1" fill="#000" opacity="0.8"/><rect x="16" y="13" width="1" height="1" fill="#000" opacity="1"/><rect x="16" y="12" width="1" height="1" fill="#000" opacity="0.8"/><rect x="17" y="13" width="1" height="1" fill="#000" opacity="0.45"/><rect x="17" y="12" width="2" height="1" fill="#000" opacity="0.4"/><rect x="19" y="13" width="2" height="1" fill="#000" opacity="0.6"/><rect x="19" y="14" width="1" height="1" fill="#000" opacity="0.8"/><rect x="21" y="13" width="1" height="1" fill="#000" opacity="0.6"/><rect x="21" y="12" width="1" height="1" fill="#000" opacity="0.6"/><rect x="26" y="13" width="1" height="1" fill="#000" opacity="0.8"/><rect x="28" y="13" width="1" height="1" fill="#000" opacity="0.6"/><rect x="33" y="13" width="2" height="1" fill="#000" opacity="0.6"/><rect x="36" y="13" width="1" height="1" fill="#000" opacity="0.6"/><rect x="36" y="12" width="1" height="1" fill="#000" opacity="0.4"/><rect x="38" y="13" width="1" height="1" fill="#000" opacity="0.45"/><rect x="40" y="13" width="1" height="1" fill="#000" opacity="0.8"/><rect x="41" y="13" width="1" height="1" fill="#000" opacity="1"/><rect x="41" y="12" width="1" height="1" fill="#000" opacity="0.4"/><rect x="14" y="19" width="1" height="1" fill="#000" opacity="0.6"/><rect x="16" y="19" width="1" height="1" fill="#000" opacity="1"/><rect x="16" y="20" width="1" height="1" fill="#000" opacity="0.4"/><rect x="24" y="19" width="1" height="1" fill="#000" opacity="1"/><rect x="31" y="19" width="1" height="1" fill="#000" opacity="0.8"/><rect x="33" y="19" width="1" height="1" fill="#000" opacity="0.45"/><rect x="33" y="20" width="2" height="1" fill="#000" opacity="0.4"/><rect x="34" y="19" width="2" height="1" fill="#000" opacity="1"/><rect x="34" y="20" width="1" height="1" fill="#000" opacity="0.6"/><rect x="39" y="19" width="1" height="1" fill="#000" opacity="0.8"/><rect x="12" y="24" width="2" height="1" fill="#000" opacity="1"/><rect x="12" y="23" width="1" height="1" fill="#000" opacity="0.4"/><rect x="14" y="24" width="1" height="1" fill="#000" opacity="0.45"/><rect x="14" y="23" width="1" height="1" fill="#000" opacity="0.8"/><rect x="16" y="24" width="1" height="1" fill="#000" opacity="1"/><rect x="17" y="24" width="1" height="1" fill="#000" opacity="0.8"/><rect x="17" y="23" width="1" height="1" fill="#000" opacity="0.6"/><rect x="21" y="24" width="1" height="1" fill="#000" opacity="1"/><rect x="21" y="25" width="1" height="1" fill="#000" opacity="0.8"/><rect x="23" y="24" width="1" height="1" fill="#000" opacity="0.6"/><rect x="23" y="25" width="2" height="1" fill="#000" opacity="0.4"/><rect x="24" y="24" width="1" height="1" fill="#000" opacity="0.8"/><rect x="24" y="23" width="1" height="1" fill="#000" opacity="0.8"/><rect x="25" y="24" width="1" height="1" fill="#000" opacity="1"/><rect x="27" y="24" width="2" height="1" fill="#000" opacity="0.45"/><rect x="27" y="25" width="2" height="1" fill="#000" opacity="0.6"/><rect x="29" y="24" width="1" height="1" fill="#000" opacity="1"/><rect x="29" y="23" width="1" height="1" fill="#000" opacity="0.8"/><rect x="30" y="24" width="1" height="1" fill="#000" opacity="0.8"/><rect x="30" y="23" width="1" height="1" fill="#000" opacity="0.8"/><rect x="31" y="24" width="1" height="1" fill="#000" opacity="0.45"/><rect x="34" y="24" width="2" height="1" fill="#000" opacity="0.45"/><rect x="34" y="23" width="1" height="1" fill="#000" opacity="0.4"/><rect x="40" y="24" width="1" height="1" fill="#000" opacity="0.6"/><rect x="41" y="24" width="1" height="1" fill="#000" opacity="0.6"/><rect x="41" y="25" width="1" height="1" fill="#000" opacity="0.8"/><rect x="10" y="30" width="1" height="1" fill="#000" opacity="1"/><rect x="10" y="29" width="2" height="1" fill="#000" opacity="0.6"/><rect x="11" y="30" width="1" height="1" fill="#000" opacity="0.6"/><rect x="11" y="31" width="2" height="1" fill="#000" opacity="0.6"/><rect x="13" y="30" width="1" height="1" fill="#000" opacity="1"/><rect x="13" y="29" width="2" height="1" fill="#000" opacity="0.4"/><rect x="14" y="30" width="1" height="1" fill="#000" opacity="1"/><rect x="21" y="30" width="1" height="1" fill="#000" opacity="0.45"/><rect x="28" y="30" width="1" height="1" fill="#000" opacity="0.6"/><rect x="28" y="31" width="1" height="1" fill="#000" opacity="0.8"/><rect x="30" y="30" width="1" height="1" fill="#000" opacity="1"/><rect x="30" y="31" width="1" height="1" fill="#000" opacity="0.4"/><rect x="33" y="30" width="1" height="1" fill="#000" opacity="1"/><rect x="33" y="31" width="1" height="1" fill="#000" opacity="0.8"/><rect x="9" y="35" width="2" height="1" fill="#000" opacity="0.7"/><rect x="9" y="36" width="1" height="1" fill="#000" opacity="0.6"/><rect x="12" y="35" width="1" height="1" fill="#000" opacity="1"/><rect x="13" y="35" width="2" height="1" fill="#000" opacity="0.85"/><rect x="15" y="35" width="1" height="1" fill="#000" opacity="0.85"/><rect x="15" y="34" width="1" height="1" fill="#000" opacity="0.6"/><rect x="16" y="35" width="1" height="1" fill="#000" opacity="1"/><rect x="16" y="34" width="1" height="1" fill="#000" opacity="0.8"/><rect x="17" y="35" width="1" height="1" fill="#000" opacity="0.85"/><rect x="17" y="34" width="1" height="1" fill="#000" opacity="0.8"/><rect x="18" y="35" width="2" height="1" fill="#000" opacity="1"/><rect x="18" y="34" width="2" height="1" fill="#000" opacity="0.4"/><rect x="21" y="35" width="1" height="1" fill="#000" opacity="0.85"/><rect x="21" y="34" width="1" height="1" fill="#000" opacity="0.8"/><rect x="23" y="35" width="2" height="1" fill="#000" opacity="0.85"/><rect x="23" y="34" width="2" height="1" fill="#000" opacity="0.6"/><rect x="27" y="35" width="2" height="1" fill="#000" opacity="1"/><rect x="27" y="36" width="1" height="1" fill="#000" opacity="0.4"/><rect x="29" y="35" width="1" height="1" fill="#000" opacity="0.85"/><rect x="29" y="34" width="1" height="1" fill="#000" opacity="0.8"/><rect x="31" y="35" width="3" height="1" fill="#000" opacity="0.7"/><rect x="34" y="35" width="3" height="1" fill="#000" opacity="0.7"/><rect x="34" y="34" width="2" height="1" fill="#000" opacity="0.8"/><rect x="37" y="35" width="2" height="1" fill="#000" opacity="0.85"/><rect x="40" y="35" width="1" height="1" fill="#000" opacity="1"/><rect x="40" y="36" width="1" height="1" fill="#000" opacity="0.8"/><rect x="41" y="35" width="1" height="1" fill="#000" opacity="0.7"/><rect x="9" y="41" width="1" height="1" fill="#000" opacity="1"/><rect x="10" y="41" width="2" height="1" fill="#000" opacity="0.85"/><rect x="10" y="42" width="1" height="1" fill="#000" opacity="0.6"/><rect x="13" y="41" width="3" height="1" fill="#000" opacity="0.7"/><rect x="17" y="41" width="3" height="1" fill="#000" opacity="1"/><rect x="20" y="41" width="3" height="1" fill="#000" opacity="1"/><rect x="25" y="41" width="1" height="1" fill="#000" opacity="0.85"/><rect x="25" y="40" width="2" height="1" fill="#000" opacity="0.6"/><rect x="27" y="41" width="2" height="1" fill="#000" opacity="0.7"/><rect x="27" y="40" width="1" height="1" fill="#000" opacity="0.6"/><rect x="29" y="41" width="1" height="1" fill="#000" opacity="1"/><rect x="29" y="42" width="1" height="1" fill="#000" opacity="0.8"/><rect x="30" y="41" width="2" height="1" fill="#000" opacity="0.7"/><rect x="30" y="42" width="1" height="1" fill="#000" opacity="0.4"/><rect x="32" y="41" width="2" height="1" fill="#000" opacity="1"/><rect x="32" y="42" width="2" height="1" fill="#000" opacity="0.8"/><rect x="36" y="41" width="2" height="1" fill="#000" opacity="1"/><rect x="36" y="42" width="1" height="1" fill="#000" opacity="0.4"/><rect x="39" y="41" width="2" height="1" fill="#000" opacity="0.7"/><rect x="39" y="40" width="1" height="1" fill="#000" opacity="0.8"/><rect x="10" y="46" width="1" height="1" fill="#000" opacity="1"/><rect x="10" y="45" width="1" height="1" fill="#000" opacity="0.4"/><rect x="11" y="46" width="2" height="1" fill="#000" opacity="0.45"/><rect x="13" y="46" width="1" height="1" fill="#000" opacity="0.6"/><rect x="13" y="45" width="2" height="1" fill="#000" opacity="0.4"/><rect x="15" y="46" width="1" height="1" fill="#000" opacity="0.6"/><rect x="16" y="46" width="1" height="1" fill="#000" opacity="0.8"/><rect x="16" y="45" width="1" height="1" fill="#000" opacity="0.4"/><rect x="25" y="46" width="2" height="1" fill="#000" opacity="0.8"/><rect x="25" y="47" width="1" height="1" fill="#000" opacity="0.8"/><rect x="31" y="46" width="1" height="1" fill="#000" opacity="0.8"/><rect x="31" y="45" width="1" height="1" fill="#000" opacity="0.6"/><rect x="35" y="46" width="2" height="1" fill="#000" opacity="0.8"/><rect x="35" y="45" width="1" height="1" fill="#000" opacity="0.6"/><rect x="39" y="46" width="1" height="1" fill="#000" opacity="0.8"/><rect x="39" y="45" width="1" height="1" fill="#000" opacity="0.4"/><rect x="40" y="46" width="2" height="1" fill="#000" opacity="0.45"/><rect x="16" y="52" width="1" height="1" fill="#000" opacity="0.8"/><rect x="16" y="51" width="1" height="1" fill="#000" opacity="0.6"/><rect x="18" y="52" width="1" height="1" fill="#000" opacity="1"/><rect x="18" y="51" width="1" height="1" fill="#000" opacity="0.8"/><rect x="20" y="52" width="1" height="1" fill="#000" opacity="0.45"/><rect x="20" y="51" width="1" height="1" fill="#000" opacity="0.8"/><rect x="23" y="52" width="2" height="1" fill="#000" opacity="0.45"/><rect x="27" y="52" width="2" height="1" fill="#000" opacity="0.8"/><rect x="31" y="52" width="1" height="1" fill="#000" opacity="0.6"/><rect x="32" y="52" width="1" height="1" fill="#000" opacity="0.45"/><rect x="32" y="53" width="2" height="1" fill="#000" opacity="0.6"/><rect x="35" y="52" width="2" height="1" fill="#000" opacity="0.45"/><rect x="41" y="52" width="1" height="1" fill="#000" opacity="0.45"/></svg></div><div class="tnum" style="top:636px">6</div>
<div id="page"></div>
<div id="doc" style="left:0;top:0;width:788px;height:641px;filter:blur(0.3px)">
<div class="ln" style="top:139.45px;word-spacing:1.656px">En esta nota afirmamos exactamente lo contrario : <b><i>las problemáticas se</i></b></div>
<div class="ln" style="top:150.76px;word-spacing:0.288px"><b><i>originaron, desarrollaron y transmitieron desde abajo hacia arriba, desde</i></b></div>
<div class="ln" style="top:162.06px;word-spacing:1.721px"><b><i>los estratos inferiores y medios de las sociedades socialistas, hasta los</i></b></div>
<div class="ln" style="top:173.37px;word-spacing:2.698px"><b><i>diversos escaños de las nomenklaturas y finalmente de los aparatos</i></b></div>
<div class="ln" style="top:184.67px;word-spacing:0.608px"><b><i>políticos dirigentes. Se trató de una crisis generalizada en la esfera de la</i></b></div>
<div class="ln" style="top:195.98px;word-spacing:1.069px"><b><i>vida cotidiana de los ciudadanos socialistas, la cual inició en los países</i></b></div>
<div class="ln" style="top:207.29px;word-spacing:0.904px"><b><i>asociados a la URSS en la posguerra, a partir de principios de los años</i></b></div>
<div class="ln" style="top:218.59px;word-spacing:3.969px"><b><i>cincuenta, escaló a lo largo de las siguientes décadas, y se fue</i></b></div>
<div class="ln" style="top:229.90px;word-spacing:3.038px"><b><i>transmitiendo hacia arriba desde mediados de los años 70, cuando</i></b></div>
<div class="ln" style="top:241.20px;word-spacing:0.156px"><b><i>empezó a incluir a la sociedad soviética, en especial a rusos y ucranianos,</i></b></div>
<div class="ln" style="top:252.51px;word-spacing:0.000px"><b><i>todo lo cual llevó finalmente al colapso del sistema en 1989.</i></b></div>
<div class="ln" style="top:263.82px;word-spacing:1.610px"><b><i>Desde luego</i></b> que las condiciones exógenas, el contexto global, la eterna</div>
<div class="ln" style="top:275.12px;word-spacing:2.954px">crisis ideológica del marxismo-leninismo de los dirigentes del bloque</div>
<div class="ln" style="top:286.43px;word-spacing:3.578px">socialista, la guerra fría y la competencia ecónomica con occidente</div>
<div class="ln" style="top:297.73px;word-spacing:2.454px">influyeron mucho, <i>pero no en primera instancia.</i> De hecho lo que se</div>
<div class="ln" style="top:309.04px;word-spacing:1.435px">observa a lo largo de esas décadas es una reticencia del poder socialista</div>
<div class="ln" style="top:320.35px;word-spacing:1.000px">para efectuar cambios, pues cuando se dan diversas revueltas en Hungría,</div>
<div class="ln" style="top:331.65px;word-spacing:2.602px">Alemania oriental, Checoeslovaquia y Polonia, éstas son sencillamente</div>
<div class="ln" style="top:342.96px;word-spacing:1.155px">aplastadas por los tanques soviéticos. Se desarrollaron también poderosos</div>
<div class="ln" style="top:354.26px;word-spacing:3.564px">movimientos políticos clandestinos y semi-clandestinos de más largo</div>
<div class="ln" style="top:365.57px;word-spacing:0.513px">alcance temporal en todos estos países, el más conocido de los cuales es el</div>
<div class="ln" style="top:376.88px;word-spacing:1.382px">de Polonia, desde inicios de la década de los 70, alrededor del sindicato</div>
<div class="ln" style="top:388.18px;word-spacing:2.419px">“Solidaridad” y la iglesia polaca, entidad sumamente poderosa a nivel</div>
<div class="ln" style="top:399.49px;word-spacing:2.676px">social. Los intentos de reformas <i>desde las dirigencias nacionales</i> que</div>
<div class="ln" style="top:410.79px;word-spacing:1.187px">acompañaron a las revueltas, se dan en Hungría (1954), Checoeslovaquia</div>
<div class="ln" style="top:422.10px;word-spacing:0.560px">(1968) y Polonia (1970), debido a la presión general de la sociedad y a las</div>
<div class="ln" style="top:433.41px;word-spacing:3.550px">fases iniciales de los movimientos mencionados. Tales reformas son</div>
<div class="ln" style="top:444.71px;word-spacing:2.893px">definitivamente abortadas por el poder central soviético, que hasta la</div>
<div class="ln" style="top:456.02px;word-spacing:0.000px">muerte de Brezhnev, se mantuvo monolítico, intolerante y represivo.</div>
<div class="ln" style="top:467.32px;word-spacing:0.398px"><b><i>Desde un punto de vista social y humano en general</i></b>, era muy natural que</div>
<div class="ln" style="top:478.63px;word-spacing:1.030px">el descontento creciese <b><i>desde abajo hacia arriba, al menos en los países</i></b></div>
<div class="ln" style="top:489.94px;word-spacing:2.335px"><b><i>asociados al bloque socialista</i></b>. Tenemos por una parte, conglomerados</div>
<div class="ln" style="top:501.24px;word-spacing:7.290px">sociales esencialmente europeos, con tendencias culturales pro-</div>
<div class="ln" style="top:512.55px;word-spacing:1.109px">occidentales, en Polonia, Hungría (Budapest), Checoeslovaquia, Alemania</div>
<div class="ln" style="top:523.85px;word-spacing:1.406px">Oriental, y parcialmente en Yugoeslavia, Rumania, Bulgaria e incluso en</div>
<div class="ln" style="top:535.16px;word-spacing:2.340px">algunas regiones de la URSS. Dichos actores sociales sufren tanto las</div>
<div class="ln" style="top:546.47px;word-spacing:1.145px"><i>'incomodidades económicas'</i> como las&nbsp; <i>'represiones políticas'</i> del sistema,</div>
</div>
</div></div>
</body></html>
